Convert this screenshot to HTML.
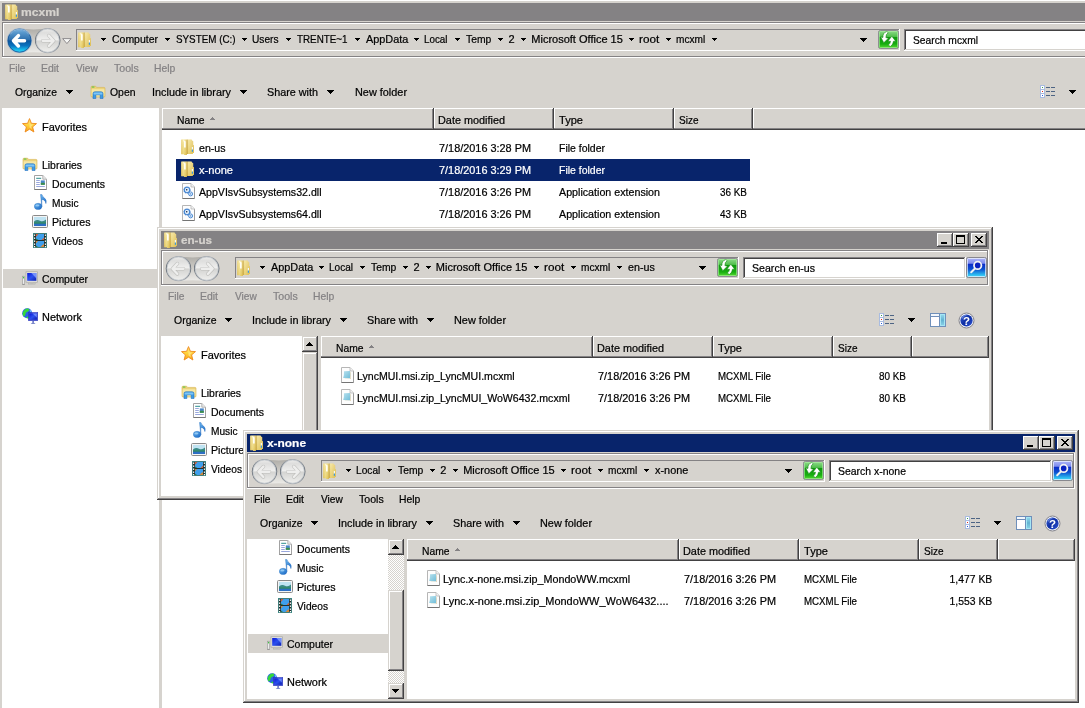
<!DOCTYPE html>
<html><head><meta charset="utf-8"><title>mcxml</title><style>html,body{margin:0;padding:0}body{width:1085px;height:708px;overflow:hidden;background:#fff;position:relative;font-family:"Liberation Sans",sans-serif;font-size:11px;line-height:13px;color:#000}div,span,svg{position:absolute;display:block}span{white-space:pre;-webkit-text-stroke:.22px}.w{background:#d6d3ce;overflow:hidden}</style></head><body>
<div id="root" style="left:0;top:0;width:1085px;height:708px;will-change:transform">
<svg width="0" height="0" style="left:0;top:0"><defs>
<linearGradient id="gFold" x1="0" y1="0" x2="1" y2="0"><stop offset="0" stop-color="#e9cd68"/><stop offset=".2" stop-color="#f6e690"/><stop offset=".4" stop-color="#e7cb62"/><stop offset=".49" stop-color="#cfac44"/><stop offset=".58" stop-color="#f3df86"/><stop offset="1" stop-color="#e2c256"/></linearGradient>
<linearGradient id="gFoldV" x1="0" y1="0" x2="0" y2="1"><stop offset="0" stop-color="#fff" stop-opacity=".25"/><stop offset="1" stop-color="#c9a63c" stop-opacity=".25"/></linearGradient>
<linearGradient id="gBlue" x1="0" y1="0" x2="0" y2="1"><stop offset="0" stop-color="#86b8e0"/><stop offset=".14" stop-color="#5b9ace"/><stop offset=".49" stop-color="#2a6cab"/><stop offset=".5" stop-color="#0a559c"/><stop offset=".72" stop-color="#0a74c0"/><stop offset=".9" stop-color="#19bdec"/><stop offset="1" stop-color="#3ad8fa"/></linearGradient>
<linearGradient id="gDis" x1="0" y1="0" x2="0" y2="1"><stop offset="0" stop-color="#ebebea"/><stop offset=".16" stop-color="#dededd"/><stop offset=".49" stop-color="#f0f0ef"/><stop offset=".5" stop-color="#d3d3d1"/><stop offset="1" stop-color="#efefed"/></linearGradient>
<linearGradient id="gRing" x1="0" y1="0" x2="0" y2="1"><stop offset="0" stop-color="#a9aeb4"/><stop offset=".5" stop-color="#59616b"/><stop offset="1" stop-color="#a9aeb4"/></linearGradient>
<linearGradient id="gBridge" x1="0" y1="0" x2="0" y2="1"><stop offset="0" stop-color="#aeaca7"/><stop offset=".5" stop-color="#cfcdc8"/><stop offset="1" stop-color="#ecebe8"/></linearGradient>
<linearGradient id="gGreen" x1="0" y1="0" x2="0" y2="1"><stop offset="0" stop-color="#92dc8e"/><stop offset=".33" stop-color="#52c04e"/><stop offset=".38" stop-color="#0f9a0f"/><stop offset=".75" stop-color="#18ae10"/><stop offset="1" stop-color="#5ee038"/></linearGradient>
<linearGradient id="gSrch" x1="0" y1="0" x2="0" y2="1"><stop offset="0" stop-color="#b8bcfa"/><stop offset=".12" stop-color="#9ca6f4"/><stop offset=".29" stop-color="#7e8cee"/><stop offset=".33" stop-color="#0c2cc8"/><stop offset=".58" stop-color="#0a4ed0"/><stop offset=".85" stop-color="#2ab6ee"/><stop offset="1" stop-color="#4ee0fa"/></linearGradient>
<linearGradient id="gHelp" x1="0" y1="0" x2="1" y2="1"><stop offset="0" stop-color="#3a5ed0"/><stop offset=".5" stop-color="#0d2ea4"/><stop offset="1" stop-color="#2f55d4"/></linearGradient>
<linearGradient id="gSky" x1="0" y1="0" x2="1" y2="1"><stop offset="0" stop-color="#b9e2ee"/><stop offset="1" stop-color="#6fbcd8"/></linearGradient>
<linearGradient id="gMon" x1="0" y1="0" x2="1" y2="1"><stop offset="0" stop-color="#0a18d8"/><stop offset=".5" stop-color="#2b50ee"/><stop offset="1" stop-color="#0c1fb0"/></linearGradient>
<linearGradient id="gStar" x1="0" y1="0" x2="0" y2="1"><stop offset="0" stop-color="#ffe27a"/><stop offset=".5" stop-color="#ffd23a"/><stop offset="1" stop-color="#f7a21b"/></linearGradient>
<linearGradient id="gNote" x1="0" y1="0" x2="1" y2="1"><stop offset="0" stop-color="#6db6ee"/><stop offset="1" stop-color="#1565c4"/></linearGradient>
<linearGradient id="gPane" x1="0" y1="0" x2="0" y2="1"><stop offset="0" stop-color="#8fd4ea"/><stop offset=".5" stop-color="#62b2d2"/><stop offset="1" stop-color="#86cfe6"/></linearGradient>
<pattern id="dith" width="2" height="2" patternUnits="userSpaceOnUse"><rect width="2" height="2" fill="#d6d3ce"/><rect width="1" height="1" fill="#fff"/><rect x="1" y="1" width="1" height="1" fill="#fff"/></pattern>
</defs></svg>
<div class="w" style="left:-2px;top:-1px;width:1156px;height:760px">
<div style="left:1px;top:1px;width:1154px;height:1px;background:#ffffff;"></div>
<div style="left:1px;top:1px;width:1px;height:758px;background:#ffffff;"></div>
<div style="left:0px;top:759px;width:1156px;height:1px;background:#424142;"></div>
<div style="left:1155px;top:0px;width:1px;height:760px;background:#424142;"></div>
<div style="left:1px;top:758px;width:1154px;height:1px;background:#848284;"></div>
<div style="left:1154px;top:1px;width:1px;height:758px;background:#848284;"></div>
<div style="left:4px;top:4px;width:1148px;height:18px;background:#848284;"></div>
<svg style="left:7px;top:5px" width="13" height="16" viewBox="0 0 13 16"><path d="M0.6 0.4h9.6q.8 0 .8 .8v.6h.6q.6 0 .6 .6v3.6h.3q.5 0 .5 .5v7q0 .5-.5 .5h-.6v.6q0 .5-.5 .5H6v.5q0 .4-.4 .4H3.4q-.4 0-.4-.4V15.200H.6q-.5 0-.5-.5V.9q0-.5 .5-.5z" fill="url(#gFold)"/><path d="M0.6 0.4h9.6q.8 0 .8 .8v.6h.6q.6 0 .6 .6v3.6h.3q.5 0 .5 .5v7q0 .5-.5 .5h-.6v.6q0 .5-.5 .5H6v.5q0 .4-.4 .4H3.4q-.4 0-.4-.4V15.200H.6q-.5 0-.5-.5V.9q0-.5 .5-.5z" fill="url(#gFoldV)"/><path d="M1.900 1.200l1.900 .5q.9 .3 .9 1.200V8.500H3V2.900z" fill="#fffef6"/><rect x="5.400" y="1" width=".9" height="14" fill="#cdb052" opacity=".55"/><rect x="10.800" y="8" width="1.200" height="2.600" fill="#f4f8fb"/><rect x="10.800" y="10.600" width="1.200" height="2.200" fill="#3a9ae0"/></svg>
<span style="left:23px;top:7px;transform:scaleX(1.0989);transform-origin:0 0;font-weight:bold;color:#d6d3ce;">mcxml</span>
<div style="left:4px;top:23px;width:1148px;height:1px;background:#848284;"></div>
<div style="left:4px;top:23px;width:1px;height:36px;background:#848284;"></div>
<div style="left:5px;top:24px;width:1146px;height:1px;background:#ffffff;"></div>
<div style="left:5px;top:24px;width:1px;height:34px;background:#ffffff;"></div>
<div style="left:5px;top:57px;width:1146px;height:1px;background:#848284;"></div>
<div style="left:1150px;top:24px;width:1px;height:34px;background:#848284;"></div>
<div style="left:4px;top:58px;width:1148px;height:1px;background:#ffffff;"></div>
<div style="left:1151px;top:23px;width:1px;height:36px;background:#ffffff;"></div>
<svg style="left:7px;top:27px" width="58" height="29" viewBox="0 0 58 29"><path d="M12.5 2.299999999999999Q28.6 4.6 44.7 2.299999999999999V26.9Q28.6 25.6 12.5 26.9z" fill="url(#gBridge)"/><circle cx="14.5" cy="14.6" r="12.7" fill="#a9bccd"/><circle cx="14.5" cy="14.6" r="11.6" fill="url(#gBlue)" stroke="#0f4f94" stroke-width=".8"/><path d="M5.0 8.6A11 11 0 0 1 24.0 8.6" fill="none" stroke="#b8d6ee" stroke-width="1" opacity=".7"/><path d="M19.5 14.799999999999999H9.5M13.4 9.6L8.5 14.799999999999999L13.4 20.0" fill="none" stroke="#fff" stroke-width="3.5" stroke-linecap="round" stroke-linejoin="round" opacity="1"/><circle cx="42.7" cy="14.6" r="12.7" fill="url(#gRing)"/><circle cx="42.7" cy="14.6" r="11.6" fill="url(#gDis)" stroke="#c4c9ce" stroke-width=".8"/><path d="M37.7 14.799999999999999H47.7M43.800000000000004 9.6L48.7 14.799999999999999L43.800000000000004 20.0" fill="none" stroke="#b4b3b0" stroke-width="3.6" stroke-linecap="round" stroke-linejoin="round" opacity="0.7"/><path d="M37.7 14.799999999999999H47.7M43.800000000000004 9.6L48.7 14.799999999999999L43.800000000000004 20.0" fill="none" stroke="#eeeeed" stroke-width="2.4" stroke-linecap="round" stroke-linejoin="round" opacity="1"/></svg>
<svg style="left:64px;top:39px" width="10" height="7"><path d="M.7 .6h8.400L4.900 5.600z" fill="#f6f6f4" stroke="#848284" stroke-width=".9"/></svg>
<div style="left:78px;top:30px;width:824px;height:1px;background:#848284;"></div>
<div style="left:78px;top:30px;width:1px;height:22px;background:#848284;"></div>
<div style="left:78px;top:51px;width:824px;height:1px;background:#ffffff;"></div>
<div style="left:901px;top:30px;width:1px;height:22px;background:#ffffff;"></div>
<svg style="left:80px;top:33px" width="13" height="16" viewBox="0 0 13 16"><path d="M0.6 0.4h9.6q.8 0 .8 .8v.6h.6q.6 0 .6 .6v3.6h.3q.5 0 .5 .5v7q0 .5-.5 .5h-.6v.6q0 .5-.5 .5H6v.5q0 .4-.4 .4H3.4q-.4 0-.4-.4V15.200H.6q-.5 0-.5-.5V.9q0-.5 .5-.5z" fill="url(#gFold)"/><path d="M0.6 0.4h9.6q.8 0 .8 .8v.6h.6q.6 0 .6 .6v3.6h.3q.5 0 .5 .5v7q0 .5-.5 .5h-.6v.6q0 .5-.5 .5H6v.5q0 .4-.4 .4H3.4q-.4 0-.4-.4V15.200H.6q-.5 0-.5-.5V.9q0-.5 .5-.5z" fill="url(#gFoldV)"/><path d="M1.900 1.200l1.900 .5q.9 .3 .9 1.200V8.500H3V2.900z" fill="#fffef6"/><rect x="5.400" y="1" width=".9" height="14" fill="#cdb052" opacity=".55"/><rect x="10.800" y="8" width="1.200" height="2.600" fill="#f4f8fb"/><rect x="10.800" y="10.600" width="1.200" height="2.200" fill="#3a9ae0"/></svg>
<svg style="left:103px;top:39px" width="5" height="3" shape-rendering="crispEdges" fill="#000"><rect x="0" y="0" width="5" height="1"/><rect x="1" y="1" width="3" height="1"/><rect x="2" y="2" width="1" height="1"/></svg>
<span style="left:113.5px;top:34px;transform:scaleX(0.9525);transform-origin:0 0;">Computer</span>
<svg style="left:167px;top:39px" width="5" height="3" shape-rendering="crispEdges" fill="#000"><rect x="0" y="0" width="5" height="1"/><rect x="1" y="1" width="3" height="1"/><rect x="2" y="2" width="1" height="1"/></svg>
<span style="left:177.5px;top:34px;transform:scaleX(0.8932);transform-origin:0 0;">SYSTEM (C:)</span>
<svg style="left:244px;top:39px" width="5" height="3" shape-rendering="crispEdges" fill="#000"><rect x="0" y="0" width="5" height="1"/><rect x="1" y="1" width="3" height="1"/><rect x="2" y="2" width="1" height="1"/></svg>
<span style="left:254.3px;top:34px;transform:scaleX(0.9226);transform-origin:0 0;">Users</span>
<svg style="left:288px;top:39px" width="5" height="3" shape-rendering="crispEdges" fill="#000"><rect x="0" y="0" width="5" height="1"/><rect x="1" y="1" width="3" height="1"/><rect x="2" y="2" width="1" height="1"/></svg>
<span style="left:298.5px;top:34px;transform:scaleX(0.8932);transform-origin:0 0;">TRENTE~1</span>
<svg style="left:357px;top:39px" width="5" height="3" shape-rendering="crispEdges" fill="#000"><rect x="0" y="0" width="5" height="1"/><rect x="1" y="1" width="3" height="1"/><rect x="2" y="2" width="1" height="1"/></svg>
<span style="left:367.5px;top:34px;transform:scaleX(0.9882);transform-origin:0 0;">AppData</span>
<svg style="left:416px;top:39px" width="5" height="3" shape-rendering="crispEdges" fill="#000"><rect x="0" y="0" width="5" height="1"/><rect x="1" y="1" width="3" height="1"/><rect x="2" y="2" width="1" height="1"/></svg>
<span style="left:426.3px;top:34px;transform:scaleX(0.8937);transform-origin:0 0;">Local</span>
<svg style="left:457px;top:39px" width="5" height="3" shape-rendering="crispEdges" fill="#000"><rect x="0" y="0" width="5" height="1"/><rect x="1" y="1" width="3" height="1"/><rect x="2" y="2" width="1" height="1"/></svg>
<span style="left:467.5px;top:34px;transform:scaleX(0.9406);transform-origin:0 0;">Temp</span>
<svg style="left:500px;top:39px" width="5" height="3" shape-rendering="crispEdges" fill="#000"><rect x="0" y="0" width="5" height="1"/><rect x="1" y="1" width="3" height="1"/><rect x="2" y="2" width="1" height="1"/></svg>
<span style="left:510.5px;top:34px;">2</span>
<svg style="left:523px;top:39px" width="5" height="3" shape-rendering="crispEdges" fill="#000"><rect x="0" y="0" width="5" height="1"/><rect x="1" y="1" width="3" height="1"/><rect x="2" y="2" width="1" height="1"/></svg>
<span style="left:533.3px;top:34px;">Microsoft Office 15</span>
<svg style="left:631px;top:39px" width="5" height="3" shape-rendering="crispEdges" fill="#000"><rect x="0" y="0" width="5" height="1"/><rect x="1" y="1" width="3" height="1"/><rect x="2" y="2" width="1" height="1"/></svg>
<span style="left:641.2px;top:34px;transform:scaleX(1.0658);transform-origin:0 0;">root</span>
<svg style="left:668px;top:39px" width="5" height="3" shape-rendering="crispEdges" fill="#000"><rect x="0" y="0" width="5" height="1"/><rect x="1" y="1" width="3" height="1"/><rect x="2" y="2" width="1" height="1"/></svg>
<span style="left:678px;top:34px;transform:scaleX(0.9191);transform-origin:0 0;">mcxml</span>
<svg style="left:714px;top:39px" width="5" height="3" shape-rendering="crispEdges" fill="#000"><rect x="0" y="0" width="5" height="1"/><rect x="1" y="1" width="3" height="1"/><rect x="2" y="2" width="1" height="1"/></svg>
<svg style="left:862px;top:39px" width="7" height="4" shape-rendering="crispEdges" fill="#000"><rect x="0" y="0" width="7" height="1"/><rect x="1" y="1" width="5" height="1"/><rect x="2" y="2" width="3" height="1"/><rect x="3" y="3" width="1" height="1"/></svg>
<svg style="left:880px;top:31px" width="21" height="19" viewBox="0 0 21 19"><rect x=".5" y=".5" width="20" height="18" rx="1.800" fill="url(#gGreen)" stroke="#8e8e92"/><rect x="1.500" y="1.500" width="18" height="16" rx="1" fill="none" stroke="#b4f0a8" stroke-width=".8" opacity=".75"/><path d="M10.200 2.800Q7.700 4 7.900 7.600L10.400 8.200 5.800 12.700 2.700 6.900 5 7.400Q4.500 3 8.800 1.500z" fill="#fff" stroke="#0c7c0c" stroke-width=".5"/><path d="M13.800 6.300L17.700 11.200H15.500Q15.100 14.900 12.300 16.500L10.300 15Q12.500 13.600 12.500 11.200H9.900z" fill="#fff" stroke="#0c7c0c" stroke-width=".5"/></svg>
<div style="left:906px;top:30px;width:223px;height:22px;background:#ffffff;"></div>
<div style="left:906px;top:30px;width:223px;height:1px;background:#848284;"></div>
<div style="left:906px;top:30px;width:1px;height:22px;background:#848284;"></div>
<div style="left:907px;top:31px;width:221px;height:1px;background:#424142;"></div>
<div style="left:907px;top:31px;width:1px;height:20px;background:#424142;"></div>
<div style="left:907px;top:50px;width:221px;height:1px;background:#d6d3ce;"></div>
<div style="left:1127px;top:31px;width:1px;height:20px;background:#d6d3ce;"></div>
<div style="left:906px;top:51px;width:223px;height:1px;background:#ffffff;"></div>
<div style="left:1128px;top:30px;width:1px;height:22px;background:#ffffff;"></div>
<span style="left:914.5px;top:35px;transform:scaleX(0.9329);transform-origin:0 0;">Search mcxml</span>
<span style="left:11.2px;top:63px;transform:scaleX(0.9310);transform-origin:0 0;color:#848284;">File</span>
<span style="left:42.8px;top:63px;transform:scaleX(0.9496);transform-origin:0 0;color:#848284;">Edit</span>
<span style="left:77.8px;top:63px;transform:scaleX(0.9220);transform-origin:0 0;color:#848284;">View</span>
<span style="left:116px;top:63px;transform:scaleX(0.9619);transform-origin:0 0;color:#848284;">Tools</span>
<span style="left:156px;top:63px;transform:scaleX(0.9416);transform-origin:0 0;color:#848284;">Help</span>
<svg style="left:92px;top:86px" width="16" height="14" viewBox="0 0 16 14"><path d="M1 2.200q0-1 1-1h3.600l1 1.200H14q1 0 1 1V11q0 1-1 1H2q-1 0-1-1z" fill="#ecd27a" stroke="#d6b34d" stroke-width=".6"/><rect x="1.800" y="1.600" width="2.600" height=".9" fill="#39c43e"/><path d="M1.600 4.200h12.800v6.600q0 .6-.6 .6H2.200q-.6 0-.6-.6z" fill="#f6e7a6"/><path d="M3 13.600V8.600q0-1.800 1.800-1.800h6.400q1.800 0 1.800 1.800v5H10.200V10.400q0-.6-.6-.6H6.400q-.6 0-.6 .6v3.200z" fill="#3d9be6" stroke="#1f6fc0" stroke-width=".6"/><path d="M3.600 8.600q0-1.200 1.200-1.200h6.400q1.200 0 1.200 1.200v.8H3.600z" fill="#8fd0f8" opacity=".8"/></svg>
<span style="left:17px;top:87px;transform:scaleX(0.9410);transform-origin:0 0;">Organize</span>
<svg style="left:68px;top:91px" width="7" height="4" shape-rendering="crispEdges" fill="#000"><rect x="0" y="0" width="7" height="1"/><rect x="1" y="1" width="5" height="1"/><rect x="2" y="2" width="3" height="1"/><rect x="3" y="3" width="1" height="1"/></svg>
<span style="left:111.5px;top:87px;transform:scaleX(0.9477);transform-origin:0 0;">Open</span>
<span style="left:154px;top:87px;transform:scaleX(0.9864);transform-origin:0 0;">Include in library</span>
<svg style="left:242px;top:91px" width="7" height="4" shape-rendering="crispEdges" fill="#000"><rect x="0" y="0" width="7" height="1"/><rect x="1" y="1" width="5" height="1"/><rect x="2" y="2" width="3" height="1"/><rect x="3" y="3" width="1" height="1"/></svg>
<span style="left:269.3px;top:87px;transform:scaleX(0.9814);transform-origin:0 0;">Share with</span>
<svg style="left:329px;top:91px" width="7" height="4" shape-rendering="crispEdges" fill="#000"><rect x="0" y="0" width="7" height="1"/><rect x="1" y="1" width="5" height="1"/><rect x="2" y="2" width="3" height="1"/><rect x="3" y="3" width="1" height="1"/></svg>
<span style="left:356.5px;top:87px;transform:scaleX(0.9891);transform-origin:0 0;">New folder</span>
<svg style="left:1042px;top:86px" width="15" height="13" viewBox="0 0 15 13"><g shape-rendering="crispEdges"><rect x="0" y="0" width="5" height="13" fill="#a9bce0"/><rect x="1" y="1" width="3" height="3" fill="#fff"/><rect x="2" y="2" width="1" height="1" fill="#3a9a4a"/><rect x="6" y="2" width="4" height="1" fill="#4d6484"/><rect x="11" y="2" width="4" height="1" fill="#4d6484"/><rect x="1" y="5" width="3" height="3" fill="#fff"/><rect x="2" y="6" width="1" height="1" fill="#e02a1a"/><rect x="6" y="6" width="4" height="1" fill="#4d6484"/><rect x="11" y="6" width="4" height="1" fill="#4d6484"/><rect x="1" y="9" width="3" height="3" fill="#fff"/><rect x="2" y="10" width="1" height="1" fill="#2a5ae0"/><rect x="6" y="10" width="4" height="1" fill="#4d6484"/><rect x="11" y="10" width="4" height="1" fill="#4d6484"/></g></svg>
<svg style="left:1071px;top:91px" width="7" height="4" shape-rendering="crispEdges" fill="#000"><rect x="0" y="0" width="7" height="1"/><rect x="1" y="1" width="5" height="1"/><rect x="2" y="2" width="3" height="1"/><rect x="3" y="3" width="1" height="1"/></svg>
<div style="left:4px;top:109px;width:157px;height:647px;background:#fff;overflow:hidden">
<svg style="left:20px;top:10px" width="15" height="15" viewBox="0 0 15 15"><path d="M7.500 .6L9.400 5.300 14.500 5.600 10.600 8.900 11.900 14 7.500 11.200 3.100 14 4.400 8.900 .5 5.600 5.600 5.300z" fill="url(#gStar)" stroke="#ee8a1e" stroke-width=".9" stroke-linejoin="round"/><path d="M7.500 3.500l1.100 2.900 2.700 .2-2.100 1.800 .7 2.700-2.400-1.500z" fill="#fff3b0" opacity=".55"/></svg>
<span style="left:39.8px;top:13px;transform:scaleX(0.9949);transform-origin:0 0;">Favorites</span>
<svg style="left:20px;top:49px" width="16" height="14" viewBox="0 0 16 14"><path d="M1 2.200q0-1 1-1h3.600l1 1.200H14q1 0 1 1V11q0 1-1 1H2q-1 0-1-1z" fill="#ecd27a" stroke="#d6b34d" stroke-width=".6"/><rect x="1.800" y="1.600" width="2.600" height=".9" fill="#39c43e"/><path d="M1.600 4.200h12.800v6.600q0 .6-.6 .6H2.200q-.6 0-.6-.6z" fill="#f6e7a6"/><path d="M3 13.600V8.600q0-1.800 1.800-1.800h6.400q1.800 0 1.800 1.800v5H10.200V10.400q0-.6-.6-.6H6.400q-.6 0-.6 .6v3.200z" fill="#3d9be6" stroke="#1f6fc0" stroke-width=".6"/><path d="M3.600 8.600q0-1.200 1.200-1.200h6.400q1.200 0 1.200 1.200v.8H3.600z" fill="#8fd0f8" opacity=".8"/></svg>
<span style="left:39.8px;top:51px;transform:scaleX(0.9483);transform-origin:0 0;">Libraries</span>
<svg style="left:32px;top:67px" width="13" height="15" viewBox="0 0 13 15"><path d="M.5 .5h8.300l3.700 3.700V14.500H.5z" fill="#fff" stroke="#a2a2a2" stroke-width="1"/><path d="M8.800 .5v3.700h3.700" fill="#ececec" stroke="#a2a2a2" stroke-width=".8"/><g stroke="#8c9cd8" stroke-width=".9"><path d="M2.200 5.500h3.600M2.200 7.500h3.600M2.200 9.500h3.600M2.200 11.500h8.600"/></g><path d="M2.200 3.300h5" stroke="#2a8c8c" stroke-width="1"/><rect x="6.800" y="5.400" width="4" height="4.400" fill="#4a86c8"/><rect x="6.800" y="7.800" width="4" height="2" fill="#3f8f4a"/><path d="M.5 14.500h12" stroke="#777" stroke-width="1"/></svg>
<span style="left:49.9px;top:70px;transform:scaleX(0.9527);transform-origin:0 0;">Documents</span>
<svg style="left:32px;top:86px" width="13" height="16" viewBox="0 0 13 16"><path d="M6.500 .4h1.300q.5 2 2.600 3.500 2.700 2 1.500 5.700-.1-2.700-2.300-3.700-1-.4-1.800-.5V12.500z" fill="url(#gNote)" stroke="#1d66bc" stroke-width=".4"/><ellipse cx="4.100" cy="12.400" rx="3.800" ry="3.100" fill="url(#gNote)" stroke="#1d66bc" stroke-width=".4"/><ellipse cx="3.400" cy="11.400" rx="2" ry="1" fill="#a8d8fa" opacity=".75"/></svg>
<span style="left:49.9px;top:89px;transform:scaleX(0.9226);transform-origin:0 0;">Music</span>
<svg style="left:29.8px;top:107px" width="16" height="13" viewBox="0 0 16 13"><rect x=".5" y=".5" width="15" height="12" rx="1" fill="#f4f4f4" stroke="#8a8a8a"/><rect x="2" y="2" width="12" height="9" fill="#bfe3f2"/><path d="M2 6.500q3-2.500 6-.8t6-1.200V9H2z" fill="#3b8a86"/><rect x="2" y="8.200" width="12" height="2.800" fill="#2d6fc4"/><rect x="2" y="7.600" width="12" height=".9" fill="#2f8a4e"/></svg>
<span style="left:49.9px;top:108px;transform:scaleX(0.9689);transform-origin:0 0;">Pictures</span>
<svg style="left:31px;top:125px" width="14" height="15" viewBox="0 0 14 15"><rect x=".3" y=".3" width="13.400" height="14.400" fill="#20302e" stroke="#2e8a86" stroke-width=".6"/><rect x="3" y="1" width="8" height="6" fill="#3f9fec"/><rect x="3" y="8" width="8" height="6" fill="#3f9fec"/><path d="M3 1h2.500L3 4zM11 4.500V7H8.500z" fill="#c8603a"/><path d="M3 8h2L3 10.500zM11 11v3H7.500l2-2z" fill="#d08a3a"/><path d="M3 5.500l2.500 1.500H3zM3 12.500l2 1.500H3z" fill="#2a7a4a"/><g fill="#fff"><rect x="1" y="1.500" width="1.200" height="1.400"/><rect x="1" y="4.500" width="1.200" height="1.400"/><rect x="1" y="7.500" width="1.200" height="1.400"/><rect x="1" y="10.500" width="1.200" height="1.400"/><rect x="1" y="13" width="1.200" height="1.200"/><rect x="11.800" y="1.500" width="1.200" height="1.400"/><rect x="11.800" y="4.500" width="1.200" height="1.400"/><rect x="11.800" y="7.500" width="1.200" height="1.400"/><rect x="11.800" y="10.500" width="1.200" height="1.400"/><rect x="11.800" y="13" width="1.200" height="1.200"/></g></svg>
<span style="left:49.9px;top:127px;transform:scaleX(0.9272);transform-origin:0 0;">Videos</span>
<div style="left:1px;top:161px;width:156px;height:19px;background:#d6d3ce;"></div>
<svg style="left:20px;top:163px" width="16" height="14" viewBox="0 0 16 14"><rect x=".6" y="5.200" width="2" height="8" fill="#ececec" stroke="#9a9a9a" stroke-width=".6"/><rect x="1.100" y="5.800" width="1" height="1.600" fill="#2fc02f"/><rect x="4" y=".8" width="11.600" height="10.400" fill="#e6e6e2" stroke="#a4a4a0" stroke-width=".7"/><rect x="5.200" y="2" width="9.200" height="7.800" fill="url(#gMon)"/><path d="M9.400 2h5v5.500z" fill="#8fa8ff" opacity=".75"/><rect x="8.400" y="11.400" width="2.800" height="1.400" fill="#c0c0bc"/><rect x="6.200" y="12.600" width="7.200" height="1.100" fill="#dededa" stroke="#a4a4a0" stroke-width=".4"/><rect x=".4" y="13.200" width="2.400" height=".7" fill="#8a8a8a"/></svg>
<span style="left:39.8px;top:165px;transform:scaleX(0.9525);transform-origin:0 0;">Computer</span>
<svg style="left:20px;top:200px" width="16" height="16" viewBox="0 0 16 16"><circle cx="5.200" cy="5.300" r="5" fill="#2a62e4"/><path d="M1.600 3q2-2.800 4.800-2.400 1.600 1.400-.4 3-2.600 .6-2.600 2.600T1.500 8.400Q-.2 5.600 1.600 3z" fill="#34d83a"/><path d="M5.600 8.400q2 .4 1.600 2-2 .6-3.200-1z" fill="#34d83a"/><path d="M7.400 1.400q2 1 2.600 3l-1.600-.4z" fill="#7fd0ff"/><rect x="6.400" y="4.600" width="9.400" height="8" fill="#3a4ad8" stroke="#2a38b8" stroke-width=".6"/><rect x="7.400" y="5.600" width="7.400" height="6" fill="url(#gMon)"/><path d="M10.500 5.600h4.300v4z" fill="#7f9aff" opacity=".75"/><rect x="10.400" y="12.800" width="1.400" height="1.800" fill="#5060c0"/><path d="M8.600 15.700l2.500-1.400 2.500 1.400z" fill="#5060b8"/></svg>
<span style="left:39.8px;top:203px;transform:scaleX(0.9916);transform-origin:0 0;">Network</span>
</div>
<div style="left:164px;top:109px;width:988px;height:647px;background:#ffffff;"></div>
<div style="left:164px;top:109px;width:988px;height:22px;background:#d6d3ce;"></div>
<div style="left:164px;top:129px;width:988px;height:1px;background:#848284;"></div>
<div style="left:164px;top:130px;width:988px;height:1px;background:#424142;"></div>
<div style="left:164px;top:109px;width:272px;height:1px;background:#ffffff;"></div>
<div style="left:164px;top:109px;width:1px;height:20px;background:#ffffff;"></div>
<div style="left:434px;top:110px;width:1px;height:20px;background:#848284;"></div>
<div style="left:435px;top:109px;width:1px;height:22px;background:#424142;"></div>
<span style="left:179.3px;top:115px;transform:scaleX(0.9373);transform-origin:0 0;">Name</span>
<div style="left:436px;top:109px;width:120px;height:1px;background:#ffffff;"></div>
<div style="left:436px;top:109px;width:1px;height:20px;background:#ffffff;"></div>
<div style="left:554px;top:110px;width:1px;height:20px;background:#848284;"></div>
<div style="left:555px;top:109px;width:1px;height:22px;background:#424142;"></div>
<span style="left:440.2px;top:115px;transform:scaleX(0.9872);transform-origin:0 0;">Date modified</span>
<div style="left:556px;top:109px;width:120px;height:1px;background:#ffffff;"></div>
<div style="left:556px;top:109px;width:1px;height:20px;background:#ffffff;"></div>
<div style="left:674px;top:110px;width:1px;height:20px;background:#848284;"></div>
<div style="left:675px;top:109px;width:1px;height:22px;background:#424142;"></div>
<span style="left:561px;top:115px;transform:scaleX(1.0064);transform-origin:0 0;">Type</span>
<div style="left:676px;top:109px;width:79px;height:1px;background:#ffffff;"></div>
<div style="left:676px;top:109px;width:1px;height:20px;background:#ffffff;"></div>
<div style="left:753px;top:110px;width:1px;height:20px;background:#848284;"></div>
<div style="left:754px;top:109px;width:1px;height:22px;background:#424142;"></div>
<span style="left:681px;top:115px;transform:scaleX(0.9113);transform-origin:0 0;">Size</span>
<div style="left:755px;top:109px;width:397px;height:1px;background:#ffffff;"></div>
<div style="left:755px;top:109px;width:1px;height:20px;background:#ffffff;"></div>
<div style="left:1150px;top:110px;width:1px;height:20px;background:#848284;"></div>
<div style="left:1151px;top:109px;width:1px;height:22px;background:#424142;"></div>
<svg style="left:212px;top:118px" width="5" height="3" shape-rendering="crispEdges" fill="#848284"><rect x="2" y="0" width="1" height="1"/><rect x="1" y="1" width="3" height="1"/><rect x="0" y="2" width="5" height="1"/></svg>
<svg style="left:183px;top:140px" width="13" height="16" viewBox="0 0 13 16"><path d="M0.6 0.4h9.6q.8 0 .8 .8v.6h.6q.6 0 .6 .6v3.6h.3q.5 0 .5 .5v7q0 .5-.5 .5h-.6v.6q0 .5-.5 .5H6v.5q0 .4-.4 .4H3.4q-.4 0-.4-.4V15.200H.6q-.5 0-.5-.5V.9q0-.5 .5-.5z" fill="url(#gFold)"/><path d="M0.6 0.4h9.6q.8 0 .8 .8v.6h.6q.6 0 .6 .6v3.6h.3q.5 0 .5 .5v7q0 .5-.5 .5h-.6v.6q0 .5-.5 .5H6v.5q0 .4-.4 .4H3.4q-.4 0-.4-.4V15.200H.6q-.5 0-.5-.5V.9q0-.5 .5-.5z" fill="url(#gFoldV)"/><path d="M1.900 1.200l1.900 .5q.9 .3 .9 1.200V8.500H3V2.900z" fill="#fffef6"/><rect x="5.400" y="1" width=".9" height="14" fill="#cdb052" opacity=".55"/><rect x="10.800" y="8" width="1.200" height="2.600" fill="#f4f8fb"/><rect x="10.800" y="10.600" width="1.200" height="2.200" fill="#3a9ae0"/></svg>
<span style="left:201.2px;top:143px;transform:scaleX(0.9631);transform-origin:0 0;">en-us</span>
<span style="left:440.5px;top:143px;transform:scaleX(0.9897);transform-origin:0 0;">7/18/2016 3:28 PM</span>
<span style="left:561px;top:143px;transform:scaleX(0.9525);transform-origin:0 0;">File folder</span>
<div style="left:178px;top:160px;width:574px;height:22px;background:#08246b;"></div>
<svg style="left:183px;top:162px" width="13" height="16" viewBox="0 0 13 16"><path d="M0.6 0.4h9.6q.8 0 .8 .8v.6h.6q.6 0 .6 .6v3.6h.3q.5 0 .5 .5v7q0 .5-.5 .5h-.6v.6q0 .5-.5 .5H6v.5q0 .4-.4 .4H3.4q-.4 0-.4-.4V15.200H.6q-.5 0-.5-.5V.9q0-.5 .5-.5z" fill="url(#gFold)"/><path d="M0.6 0.4h9.6q.8 0 .8 .8v.6h.6q.6 0 .6 .6v3.6h.3q.5 0 .5 .5v7q0 .5-.5 .5h-.6v.6q0 .5-.5 .5H6v.5q0 .4-.4 .4H3.4q-.4 0-.4-.4V15.200H.6q-.5 0-.5-.5V.9q0-.5 .5-.5z" fill="url(#gFoldV)"/><path d="M1.900 1.200l1.900 .5q.9 .3 .9 1.200V8.500H3V2.900z" fill="#fffef6"/><rect x="5.400" y="1" width=".9" height="14" fill="#cdb052" opacity=".55"/><rect x="10.800" y="8" width="1.200" height="2.600" fill="#f4f8fb"/><rect x="10.800" y="10.600" width="1.200" height="2.200" fill="#3a9ae0"/></svg>
<span style="left:201.2px;top:165px;transform:scaleX(1.0110);transform-origin:0 0;color:#fff;">x-none</span>
<span style="left:440.5px;top:165px;transform:scaleX(0.9897);transform-origin:0 0;color:#fff;">7/18/2016 3:29 PM</span>
<span style="left:561px;top:165px;transform:scaleX(0.9525);transform-origin:0 0;color:#fff;">File folder</span>
<svg style="left:184px;top:184px" width="13" height="16" viewBox="0 0 13 16"><path d="M.5 .5h8.500l3.500 3.500V15.500H.5z" fill="#fdfdfd" stroke="#b6b6b6" stroke-width="1"/><path d="M9 .5v3.500h3.500" fill="#f2f2f2" stroke="#b6b6b6" stroke-width=".8"/><path d="M.5 15.500h12" stroke="#747474" stroke-width="1"/><path d="M12.500 4.500v11" stroke="#9c9c9c" stroke-width="1"/><circle cx="5" cy="7" r="2.700" fill="#e4f0fc" stroke="#4a8ad4" stroke-width="1.100"/><circle cx="5" cy="7" r="3.300" fill="none" stroke="#2a6ac0" stroke-width=".7" stroke-dasharray=".9 1.200"/><circle cx="4.700" cy="6.700" r=".8" fill="#1a2a44"/><circle cx="8.600" cy="10.900" r="2" fill="#eef6fe" stroke="#4a8ad4" stroke-width="1"/><path d="M7.700 10.900h1.800M8.600 10v1.800" stroke="#3a7fd0" stroke-width=".5"/></svg>
<span style="left:201.2px;top:187px;transform:scaleX(0.9633);transform-origin:0 0;">AppVIsvSubsystems32.dll</span>
<span style="left:440.5px;top:187px;transform:scaleX(0.9897);transform-origin:0 0;">7/18/2016 3:26 PM</span>
<span style="left:561px;top:187px;transform:scaleX(0.9716);transform-origin:0 0;">Application extension</span>
<span style="right:407px;top:187px;transform:scaleX(0.9010);transform-origin:100% 0;">36 KB</span>
<svg style="left:184px;top:206px" width="13" height="16" viewBox="0 0 13 16"><path d="M.5 .5h8.500l3.500 3.500V15.500H.5z" fill="#fdfdfd" stroke="#b6b6b6" stroke-width="1"/><path d="M9 .5v3.500h3.500" fill="#f2f2f2" stroke="#b6b6b6" stroke-width=".8"/><path d="M.5 15.500h12" stroke="#747474" stroke-width="1"/><path d="M12.500 4.500v11" stroke="#9c9c9c" stroke-width="1"/><circle cx="5" cy="7" r="2.700" fill="#e4f0fc" stroke="#4a8ad4" stroke-width="1.100"/><circle cx="5" cy="7" r="3.300" fill="none" stroke="#2a6ac0" stroke-width=".7" stroke-dasharray=".9 1.200"/><circle cx="4.700" cy="6.700" r=".8" fill="#1a2a44"/><circle cx="8.600" cy="10.900" r="2" fill="#eef6fe" stroke="#4a8ad4" stroke-width="1"/><path d="M7.700 10.900h1.800M8.600 10v1.800" stroke="#3a7fd0" stroke-width=".5"/></svg>
<span style="left:201.2px;top:209px;transform:scaleX(0.9633);transform-origin:0 0;">AppVIsvSubsystems64.dll</span>
<span style="left:440.5px;top:209px;transform:scaleX(0.9897);transform-origin:0 0;">7/18/2016 3:26 PM</span>
<span style="left:561px;top:209px;transform:scaleX(0.9716);transform-origin:0 0;">Application extension</span>
<span style="right:407px;top:209px;transform:scaleX(0.9010);transform-origin:100% 0;">43 KB</span>
</div>
<div class="w" style="left:157px;top:227px;width:836px;height:273px">
<div style="left:1px;top:1px;width:834px;height:1px;background:#ffffff;"></div>
<div style="left:1px;top:1px;width:1px;height:271px;background:#ffffff;"></div>
<div style="left:0px;top:272px;width:836px;height:1px;background:#424142;"></div>
<div style="left:835px;top:0px;width:1px;height:273px;background:#424142;"></div>
<div style="left:1px;top:271px;width:834px;height:1px;background:#848284;"></div>
<div style="left:834px;top:1px;width:1px;height:271px;background:#848284;"></div>
<div style="left:4px;top:4px;width:828px;height:18px;background:#848284;"></div>
<svg style="left:7px;top:5px" width="13" height="16" viewBox="0 0 13 16"><path d="M0.6 0.4h9.6q.8 0 .8 .8v.6h.6q.6 0 .6 .6v3.6h.3q.5 0 .5 .5v7q0 .5-.5 .5h-.6v.6q0 .5-.5 .5H6v.5q0 .4-.4 .4H3.4q-.4 0-.4-.4V15.200H.6q-.5 0-.5-.5V.9q0-.5 .5-.5z" fill="url(#gFold)"/><path d="M0.6 0.4h9.6q.8 0 .8 .8v.6h.6q.6 0 .6 .6v3.6h.3q.5 0 .5 .5v7q0 .5-.5 .5h-.6v.6q0 .5-.5 .5H6v.5q0 .4-.4 .4H3.4q-.4 0-.4-.4V15.200H.6q-.5 0-.5-.5V.9q0-.5 .5-.5z" fill="url(#gFoldV)"/><path d="M1.900 1.200l1.900 .5q.9 .3 .9 1.200V8.500H3V2.900z" fill="#fffef6"/><rect x="5.400" y="1" width=".9" height="14" fill="#cdb052" opacity=".55"/><rect x="10.800" y="8" width="1.200" height="2.600" fill="#f4f8fb"/><rect x="10.800" y="10.600" width="1.200" height="2.200" fill="#3a9ae0"/></svg>
<span style="left:24px;top:7px;transform:scaleX(1.0568);transform-origin:0 0;font-weight:bold;color:#d6d3ce;">en-us</span>
<div style="left:780px;top:6px;width:16px;height:14px;background:#d6d3ce;"></div>
<div style="left:780px;top:6px;width:15px;height:1px;background:#ffffff;"></div>
<div style="left:780px;top:6px;width:1px;height:13px;background:#ffffff;"></div>
<div style="left:780px;top:19px;width:16px;height:1px;background:#424142;"></div>
<div style="left:795px;top:6px;width:1px;height:14px;background:#424142;"></div>
<div style="left:781px;top:18px;width:14px;height:1px;background:#848284;"></div>
<div style="left:794px;top:7px;width:1px;height:12px;background:#848284;"></div>
<div style="left:784px;top:15px;width:6px;height:2px;background:#000;"></div>
<div style="left:796px;top:6px;width:16px;height:14px;background:#d6d3ce;"></div>
<div style="left:796px;top:6px;width:15px;height:1px;background:#ffffff;"></div>
<div style="left:796px;top:6px;width:1px;height:13px;background:#ffffff;"></div>
<div style="left:796px;top:19px;width:16px;height:1px;background:#424142;"></div>
<div style="left:811px;top:6px;width:1px;height:14px;background:#424142;"></div>
<div style="left:797px;top:18px;width:14px;height:1px;background:#848284;"></div>
<div style="left:810px;top:7px;width:1px;height:12px;background:#848284;"></div>
<div style="left:799px;top:8px;width:9px;height:9px;background:#000;"></div>
<div style="left:800px;top:10px;width:7px;height:6px;background:#d6d3ce;"></div>
<div style="left:814px;top:6px;width:16px;height:14px;background:#d6d3ce;"></div>
<div style="left:814px;top:6px;width:15px;height:1px;background:#ffffff;"></div>
<div style="left:814px;top:6px;width:1px;height:13px;background:#ffffff;"></div>
<div style="left:814px;top:19px;width:16px;height:1px;background:#424142;"></div>
<div style="left:829px;top:6px;width:1px;height:14px;background:#424142;"></div>
<div style="left:815px;top:18px;width:14px;height:1px;background:#848284;"></div>
<div style="left:828px;top:7px;width:1px;height:12px;background:#848284;"></div>
<svg style="left:818px;top:9px" width="8" height="7" shape-rendering="crispEdges" fill="#000"><rect x="0" y="0" width="2" height="1"/><rect x="6" y="0" width="2" height="1"/><rect x="1" y="1" width="2" height="1"/><rect x="5" y="1" width="2" height="1"/><rect x="2" y="2" width="2" height="1"/><rect x="4" y="2" width="2" height="1"/><rect x="3" y="3" width="2" height="1"/><rect x="3" y="3" width="2" height="1"/><rect x="4" y="4" width="2" height="1"/><rect x="2" y="4" width="2" height="1"/><rect x="5" y="5" width="2" height="1"/><rect x="1" y="5" width="2" height="1"/><rect x="6" y="6" width="2" height="1"/><rect x="0" y="6" width="2" height="1"/></svg>
<div style="left:4px;top:23px;width:828px;height:1px;background:#848284;"></div>
<div style="left:4px;top:23px;width:1px;height:36px;background:#848284;"></div>
<div style="left:5px;top:24px;width:826px;height:1px;background:#ffffff;"></div>
<div style="left:5px;top:24px;width:1px;height:34px;background:#ffffff;"></div>
<div style="left:5px;top:57px;width:826px;height:1px;background:#848284;"></div>
<div style="left:830px;top:24px;width:1px;height:34px;background:#848284;"></div>
<div style="left:4px;top:58px;width:828px;height:1px;background:#ffffff;"></div>
<div style="left:831px;top:23px;width:1px;height:36px;background:#ffffff;"></div>
<svg style="left:7px;top:27px" width="58" height="29" viewBox="0 0 58 29"><path d="M12.5 2.299999999999999Q28.6 4.6 44.7 2.299999999999999V26.9Q28.6 25.6 12.5 26.9z" fill="url(#gBridge)"/><circle cx="14.5" cy="14.6" r="12.7" fill="url(#gRing)"/><circle cx="14.5" cy="14.6" r="11.6" fill="url(#gDis)" stroke="#c4c9ce" stroke-width=".8"/><path d="M19.5 14.799999999999999H9.5M13.4 9.6L8.5 14.799999999999999L13.4 20.0" fill="none" stroke="#b4b3b0" stroke-width="3.6" stroke-linecap="round" stroke-linejoin="round" opacity="0.7"/><path d="M19.5 14.799999999999999H9.5M13.4 9.6L8.5 14.799999999999999L13.4 20.0" fill="none" stroke="#eeeeed" stroke-width="2.4" stroke-linecap="round" stroke-linejoin="round" opacity="1"/><circle cx="42.7" cy="14.6" r="12.7" fill="url(#gRing)"/><circle cx="42.7" cy="14.6" r="11.6" fill="url(#gDis)" stroke="#c4c9ce" stroke-width=".8"/><path d="M37.7 14.799999999999999H47.7M43.800000000000004 9.6L48.7 14.799999999999999L43.800000000000004 20.0" fill="none" stroke="#b4b3b0" stroke-width="3.6" stroke-linecap="round" stroke-linejoin="round" opacity="0.7"/><path d="M37.7 14.799999999999999H47.7M43.800000000000004 9.6L48.7 14.799999999999999L43.800000000000004 20.0" fill="none" stroke="#eeeeed" stroke-width="2.4" stroke-linecap="round" stroke-linejoin="round" opacity="1"/></svg>
<div style="left:78px;top:30px;width:504px;height:1px;background:#848284;"></div>
<div style="left:78px;top:30px;width:1px;height:22px;background:#848284;"></div>
<div style="left:78px;top:51px;width:504px;height:1px;background:#ffffff;"></div>
<div style="left:581px;top:30px;width:1px;height:22px;background:#ffffff;"></div>
<svg style="left:80px;top:33px" width="13" height="16" viewBox="0 0 13 16"><path d="M0.6 0.4h9.6q.8 0 .8 .8v.6h.6q.6 0 .6 .6v3.6h.3q.5 0 .5 .5v7q0 .5-.5 .5h-.6v.6q0 .5-.5 .5H6v.5q0 .4-.4 .4H3.4q-.4 0-.4-.4V15.200H.6q-.5 0-.5-.5V.9q0-.5 .5-.5z" fill="url(#gFold)"/><path d="M0.6 0.4h9.6q.8 0 .8 .8v.6h.6q.6 0 .6 .6v3.6h.3q.5 0 .5 .5v7q0 .5-.5 .5h-.6v.6q0 .5-.5 .5H6v.5q0 .4-.4 .4H3.4q-.4 0-.4-.4V15.200H.6q-.5 0-.5-.5V.9q0-.5 .5-.5z" fill="url(#gFoldV)"/><path d="M1.900 1.200l1.900 .5q.9 .3 .9 1.200V8.500H3V2.900z" fill="#fffef6"/><rect x="5.400" y="1" width=".9" height="14" fill="#cdb052" opacity=".55"/><rect x="10.800" y="8" width="1.200" height="2.600" fill="#f4f8fb"/><rect x="10.800" y="10.600" width="1.200" height="2.200" fill="#3a9ae0"/></svg>
<svg style="left:103px;top:39px" width="5" height="3" shape-rendering="crispEdges" fill="#000"><rect x="0" y="0" width="5" height="1"/><rect x="1" y="1" width="3" height="1"/><rect x="2" y="2" width="1" height="1"/></svg>
<span style="left:113.5px;top:34px;transform:scaleX(0.9882);transform-origin:0 0;">AppData</span>
<svg style="left:162px;top:39px" width="5" height="3" shape-rendering="crispEdges" fill="#000"><rect x="0" y="0" width="5" height="1"/><rect x="1" y="1" width="3" height="1"/><rect x="2" y="2" width="1" height="1"/></svg>
<span style="left:172.3px;top:34px;transform:scaleX(0.9127);transform-origin:0 0;">Local</span>
<svg style="left:203px;top:39px" width="5" height="3" shape-rendering="crispEdges" fill="#000"><rect x="0" y="0" width="5" height="1"/><rect x="1" y="1" width="3" height="1"/><rect x="2" y="2" width="1" height="1"/></svg>
<span style="left:213.5px;top:34px;transform:scaleX(0.9406);transform-origin:0 0;">Temp</span>
<svg style="left:246px;top:39px" width="5" height="3" shape-rendering="crispEdges" fill="#000"><rect x="0" y="0" width="5" height="1"/><rect x="1" y="1" width="3" height="1"/><rect x="2" y="2" width="1" height="1"/></svg>
<span style="left:256.5px;top:34px;">2</span>
<svg style="left:269px;top:39px" width="5" height="3" shape-rendering="crispEdges" fill="#000"><rect x="0" y="0" width="5" height="1"/><rect x="1" y="1" width="3" height="1"/><rect x="2" y="2" width="1" height="1"/></svg>
<span style="left:278.8px;top:34px;">Microsoft Office 15</span>
<svg style="left:377px;top:39px" width="5" height="3" shape-rendering="crispEdges" fill="#000"><rect x="0" y="0" width="5" height="1"/><rect x="1" y="1" width="3" height="1"/><rect x="2" y="2" width="1" height="1"/></svg>
<span style="left:387.29999999999995px;top:34px;transform:scaleX(1.0658);transform-origin:0 0;">root</span>
<svg style="left:414px;top:39px" width="5" height="3" shape-rendering="crispEdges" fill="#000"><rect x="0" y="0" width="5" height="1"/><rect x="1" y="1" width="3" height="1"/><rect x="2" y="2" width="1" height="1"/></svg>
<span style="left:424.20000000000005px;top:34px;transform:scaleX(0.9191);transform-origin:0 0;">mcxml</span>
<svg style="left:460px;top:39px" width="5" height="3" shape-rendering="crispEdges" fill="#000"><rect x="0" y="0" width="5" height="1"/><rect x="1" y="1" width="3" height="1"/><rect x="2" y="2" width="1" height="1"/></svg>
<span style="left:470.5px;top:34px;transform:scaleX(0.9740);transform-origin:0 0;">en-us</span>
<svg style="left:542px;top:39px" width="7" height="4" shape-rendering="crispEdges" fill="#000"><rect x="0" y="0" width="7" height="1"/><rect x="1" y="1" width="5" height="1"/><rect x="2" y="2" width="3" height="1"/><rect x="3" y="3" width="1" height="1"/></svg>
<svg style="left:560px;top:31px" width="21" height="19" viewBox="0 0 21 19"><rect x=".5" y=".5" width="20" height="18" rx="1.800" fill="url(#gGreen)" stroke="#8e8e92"/><rect x="1.500" y="1.500" width="18" height="16" rx="1" fill="none" stroke="#b4f0a8" stroke-width=".8" opacity=".75"/><path d="M10.200 2.800Q7.700 4 7.900 7.600L10.400 8.200 5.800 12.700 2.700 6.900 5 7.400Q4.500 3 8.800 1.500z" fill="#fff" stroke="#0c7c0c" stroke-width=".5"/><path d="M13.800 6.300L17.700 11.200H15.500Q15.100 14.900 12.300 16.500L10.300 15Q12.500 13.600 12.500 11.200H9.900z" fill="#fff" stroke="#0c7c0c" stroke-width=".5"/></svg>
<div style="left:586px;top:30px;width:223px;height:22px;background:#ffffff;"></div>
<div style="left:586px;top:30px;width:223px;height:1px;background:#848284;"></div>
<div style="left:586px;top:30px;width:1px;height:22px;background:#848284;"></div>
<div style="left:587px;top:31px;width:221px;height:1px;background:#424142;"></div>
<div style="left:587px;top:31px;width:1px;height:20px;background:#424142;"></div>
<div style="left:587px;top:50px;width:221px;height:1px;background:#d6d3ce;"></div>
<div style="left:807px;top:31px;width:1px;height:20px;background:#d6d3ce;"></div>
<div style="left:586px;top:51px;width:223px;height:1px;background:#ffffff;"></div>
<div style="left:808px;top:30px;width:1px;height:22px;background:#ffffff;"></div>
<span style="left:594.5px;top:35px;transform:scaleX(0.9630);transform-origin:0 0;">Search en-us</span>
<svg style="left:809px;top:30px" width="21" height="21" viewBox="0 0 21 21"><rect x=".5" y=".5" width="20" height="20" rx="1.800" fill="url(#gSrch)" stroke="#88888e"/><rect x="1.500" y="1.500" width="18" height="18" rx="1" fill="none" stroke="#eef4ff" stroke-width=".9" opacity=".8"/><path d="M5.200 15.200l4-3.900" stroke="#f2f2f2" stroke-width="2" stroke-linecap="round"/><circle cx="11.700" cy="8.400" r="3.700" fill="#0a22c0" stroke="#f2f2f2" stroke-width="1.800"/></svg>
<span style="left:11.2px;top:63px;transform:scaleX(0.9310);transform-origin:0 0;color:#848284;">File</span>
<span style="left:42.8px;top:63px;transform:scaleX(0.9496);transform-origin:0 0;color:#848284;">Edit</span>
<span style="left:77.8px;top:63px;transform:scaleX(0.9220);transform-origin:0 0;color:#848284;">View</span>
<span style="left:116px;top:63px;transform:scaleX(0.9619);transform-origin:0 0;color:#848284;">Tools</span>
<span style="left:156px;top:63px;transform:scaleX(0.9416);transform-origin:0 0;color:#848284;">Help</span>
<span style="left:16.7px;top:87px;transform:scaleX(0.9522);transform-origin:0 0;">Organize</span>
<svg style="left:68px;top:91px" width="7" height="4" shape-rendering="crispEdges" fill="#000"><rect x="0" y="0" width="7" height="1"/><rect x="1" y="1" width="5" height="1"/><rect x="2" y="2" width="3" height="1"/><rect x="3" y="3" width="1" height="1"/></svg>
<span style="left:95.4px;top:87px;transform:scaleX(0.9864);transform-origin:0 0;">Include in library</span>
<svg style="left:183px;top:91px" width="7" height="4" shape-rendering="crispEdges" fill="#000"><rect x="0" y="0" width="7" height="1"/><rect x="1" y="1" width="5" height="1"/><rect x="2" y="2" width="3" height="1"/><rect x="3" y="3" width="1" height="1"/></svg>
<span style="left:210.4px;top:87px;transform:scaleX(0.9814);transform-origin:0 0;">Share with</span>
<svg style="left:270px;top:91px" width="7" height="4" shape-rendering="crispEdges" fill="#000"><rect x="0" y="0" width="7" height="1"/><rect x="1" y="1" width="5" height="1"/><rect x="2" y="2" width="3" height="1"/><rect x="3" y="3" width="1" height="1"/></svg>
<span style="left:297px;top:87px;transform:scaleX(0.9891);transform-origin:0 0;">New folder</span>
<svg style="left:722px;top:86px" width="15" height="13" viewBox="0 0 15 13"><g shape-rendering="crispEdges"><rect x="0" y="0" width="5" height="13" fill="#a9bce0"/><rect x="1" y="1" width="3" height="3" fill="#fff"/><rect x="2" y="2" width="1" height="1" fill="#3a9a4a"/><rect x="6" y="2" width="4" height="1" fill="#4d6484"/><rect x="11" y="2" width="4" height="1" fill="#4d6484"/><rect x="1" y="5" width="3" height="3" fill="#fff"/><rect x="2" y="6" width="1" height="1" fill="#e02a1a"/><rect x="6" y="6" width="4" height="1" fill="#4d6484"/><rect x="11" y="6" width="4" height="1" fill="#4d6484"/><rect x="1" y="9" width="3" height="3" fill="#fff"/><rect x="2" y="10" width="1" height="1" fill="#2a5ae0"/><rect x="6" y="10" width="4" height="1" fill="#4d6484"/><rect x="11" y="10" width="4" height="1" fill="#4d6484"/></g></svg>
<svg style="left:751px;top:91px" width="7" height="4" shape-rendering="crispEdges" fill="#000"><rect x="0" y="0" width="7" height="1"/><rect x="1" y="1" width="5" height="1"/><rect x="2" y="2" width="3" height="1"/><rect x="3" y="3" width="1" height="1"/></svg>
<svg style="left:773px;top:86px" width="16" height="14" viewBox="0 0 16 14"><g shape-rendering="crispEdges"><rect x="0" y="0" width="16" height="14" fill="#6f8fba"/><rect x="1" y="1" width="8" height="2" fill="#f2f6fc"/><rect x="1" y="4" width="8" height="9" fill="#fffdff"/><rect x="10" y="1" width="5" height="12" fill="#a4e6f4"/></g><rect x="11" y="2" width="3" height="10" fill="url(#gPane)"/></svg>
<svg style="left:800.5px;top:84.5px" width="17" height="17" viewBox="0 0 17 17"><circle cx="8.500" cy="8.500" r="7.500" fill="#eef0f6" stroke="#84848c" stroke-width="1"/><circle cx="8.500" cy="8.500" r="6.100" fill="url(#gHelp)"/><path d="M4 6.500A5.500 5.500 0 0 1 8.500 3" fill="none" stroke="#6f8fe0" stroke-width="1.200" opacity=".8"/><text x="8.600" y="12.600" font-family="Liberation Sans" font-weight="bold" font-size="11.500" fill="#fff" text-anchor="middle">?</text></svg>
<div style="left:4px;top:109px;width:141px;height:160px;background:#fff;overflow:hidden">
<svg style="left:20px;top:10px" width="15" height="15" viewBox="0 0 15 15"><path d="M7.500 .6L9.400 5.300 14.500 5.600 10.600 8.900 11.900 14 7.500 11.200 3.100 14 4.400 8.900 .5 5.600 5.600 5.300z" fill="url(#gStar)" stroke="#ee8a1e" stroke-width=".9" stroke-linejoin="round"/><path d="M7.500 3.500l1.100 2.900 2.700 .2-2.100 1.800 .7 2.700-2.400-1.500z" fill="#fff3b0" opacity=".55"/></svg>
<span style="left:39.8px;top:13px;transform:scaleX(0.9949);transform-origin:0 0;">Favorites</span>
<svg style="left:20px;top:49px" width="16" height="14" viewBox="0 0 16 14"><path d="M1 2.200q0-1 1-1h3.600l1 1.200H14q1 0 1 1V11q0 1-1 1H2q-1 0-1-1z" fill="#ecd27a" stroke="#d6b34d" stroke-width=".6"/><rect x="1.800" y="1.600" width="2.600" height=".9" fill="#39c43e"/><path d="M1.600 4.200h12.800v6.600q0 .6-.6 .6H2.200q-.6 0-.6-.6z" fill="#f6e7a6"/><path d="M3 13.600V8.600q0-1.800 1.800-1.800h6.400q1.800 0 1.800 1.800v5H10.200V10.400q0-.6-.6-.6H6.400q-.6 0-.6 .6v3.200z" fill="#3d9be6" stroke="#1f6fc0" stroke-width=".6"/><path d="M3.600 8.600q0-1.200 1.200-1.200h6.400q1.200 0 1.200 1.200v.8H3.600z" fill="#8fd0f8" opacity=".8"/></svg>
<span style="left:39.8px;top:51px;transform:scaleX(0.9483);transform-origin:0 0;">Libraries</span>
<svg style="left:32px;top:67px" width="13" height="15" viewBox="0 0 13 15"><path d="M.5 .5h8.300l3.700 3.700V14.500H.5z" fill="#fff" stroke="#a2a2a2" stroke-width="1"/><path d="M8.800 .5v3.700h3.700" fill="#ececec" stroke="#a2a2a2" stroke-width=".8"/><g stroke="#8c9cd8" stroke-width=".9"><path d="M2.200 5.500h3.600M2.200 7.500h3.600M2.200 9.500h3.600M2.200 11.500h8.600"/></g><path d="M2.200 3.300h5" stroke="#2a8c8c" stroke-width="1"/><rect x="6.800" y="5.400" width="4" height="4.400" fill="#4a86c8"/><rect x="6.800" y="7.800" width="4" height="2" fill="#3f8f4a"/><path d="M.5 14.500h12" stroke="#777" stroke-width="1"/></svg>
<span style="left:49.9px;top:70px;transform:scaleX(0.9527);transform-origin:0 0;">Documents</span>
<svg style="left:32px;top:86px" width="13" height="16" viewBox="0 0 13 16"><path d="M6.500 .4h1.300q.5 2 2.600 3.500 2.700 2 1.500 5.700-.1-2.700-2.300-3.700-1-.4-1.800-.5V12.500z" fill="url(#gNote)" stroke="#1d66bc" stroke-width=".4"/><ellipse cx="4.100" cy="12.400" rx="3.800" ry="3.100" fill="url(#gNote)" stroke="#1d66bc" stroke-width=".4"/><ellipse cx="3.400" cy="11.400" rx="2" ry="1" fill="#a8d8fa" opacity=".75"/></svg>
<span style="left:49.9px;top:89px;transform:scaleX(0.9226);transform-origin:0 0;">Music</span>
<svg style="left:29.8px;top:107px" width="16" height="13" viewBox="0 0 16 13"><rect x=".5" y=".5" width="15" height="12" rx="1" fill="#f4f4f4" stroke="#8a8a8a"/><rect x="2" y="2" width="12" height="9" fill="#bfe3f2"/><path d="M2 6.500q3-2.500 6-.8t6-1.200V9H2z" fill="#3b8a86"/><rect x="2" y="8.200" width="12" height="2.800" fill="#2d6fc4"/><rect x="2" y="7.600" width="12" height=".9" fill="#2f8a4e"/></svg>
<span style="left:49.9px;top:108px;transform:scaleX(0.9689);transform-origin:0 0;">Pictures</span>
<svg style="left:31px;top:125px" width="14" height="15" viewBox="0 0 14 15"><rect x=".3" y=".3" width="13.400" height="14.400" fill="#20302e" stroke="#2e8a86" stroke-width=".6"/><rect x="3" y="1" width="8" height="6" fill="#3f9fec"/><rect x="3" y="8" width="8" height="6" fill="#3f9fec"/><path d="M3 1h2.500L3 4zM11 4.500V7H8.500z" fill="#c8603a"/><path d="M3 8h2L3 10.500zM11 11v3H7.500l2-2z" fill="#d08a3a"/><path d="M3 5.500l2.500 1.500H3zM3 12.500l2 1.500H3z" fill="#2a7a4a"/><g fill="#fff"><rect x="1" y="1.500" width="1.200" height="1.400"/><rect x="1" y="4.500" width="1.200" height="1.400"/><rect x="1" y="7.500" width="1.200" height="1.400"/><rect x="1" y="10.500" width="1.200" height="1.400"/><rect x="1" y="13" width="1.200" height="1.200"/><rect x="11.800" y="1.500" width="1.200" height="1.400"/><rect x="11.800" y="4.500" width="1.200" height="1.400"/><rect x="11.800" y="7.500" width="1.200" height="1.400"/><rect x="11.800" y="10.500" width="1.200" height="1.400"/><rect x="11.800" y="13" width="1.200" height="1.200"/></g></svg>
<span style="left:49.9px;top:127px;transform:scaleX(0.9272);transform-origin:0 0;">Videos</span>
<div style="left:1px;top:161px;width:140px;height:19px;background:#d6d3ce;"></div>
<svg style="left:20px;top:163px" width="16" height="14" viewBox="0 0 16 14"><rect x=".6" y="5.200" width="2" height="8" fill="#ececec" stroke="#9a9a9a" stroke-width=".6"/><rect x="1.100" y="5.800" width="1" height="1.600" fill="#2fc02f"/><rect x="4" y=".8" width="11.600" height="10.400" fill="#e6e6e2" stroke="#a4a4a0" stroke-width=".7"/><rect x="5.200" y="2" width="9.200" height="7.800" fill="url(#gMon)"/><path d="M9.400 2h5v5.500z" fill="#8fa8ff" opacity=".75"/><rect x="8.400" y="11.400" width="2.800" height="1.400" fill="#c0c0bc"/><rect x="6.200" y="12.600" width="7.200" height="1.100" fill="#dededa" stroke="#a4a4a0" stroke-width=".4"/><rect x=".4" y="13.200" width="2.400" height=".7" fill="#8a8a8a"/></svg>
<span style="left:39.8px;top:165px;transform:scaleX(0.9525);transform-origin:0 0;">Computer</span>
<svg style="left:20px;top:200px" width="16" height="16" viewBox="0 0 16 16"><circle cx="5.200" cy="5.300" r="5" fill="#2a62e4"/><path d="M1.600 3q2-2.800 4.800-2.400 1.600 1.400-.4 3-2.600 .6-2.600 2.600T1.500 8.400Q-.2 5.600 1.600 3z" fill="#34d83a"/><path d="M5.600 8.400q2 .4 1.600 2-2 .6-3.200-1z" fill="#34d83a"/><path d="M7.400 1.400q2 1 2.600 3l-1.600-.4z" fill="#7fd0ff"/><rect x="6.400" y="4.600" width="9.400" height="8" fill="#3a4ad8" stroke="#2a38b8" stroke-width=".6"/><rect x="7.400" y="5.600" width="7.400" height="6" fill="url(#gMon)"/><path d="M10.500 5.600h4.300v4z" fill="#7f9aff" opacity=".75"/><rect x="10.400" y="12.800" width="1.400" height="1.800" fill="#5060c0"/><path d="M8.600 15.700l2.500-1.400 2.500 1.400z" fill="#5060b8"/></svg>
<span style="left:39.8px;top:203px;transform:scaleX(0.9916);transform-origin:0 0;">Network</span>
</div>
<svg style="left:145px;top:109px" width="16" height="160"><rect width="16" height="160" fill="url(#dith)"/></svg>
<div style="left:145px;top:109px;width:16px;height:16px;background:#d6d3ce;"></div>
<div style="left:146px;top:110px;width:13px;height:1px;background:#ffffff;"></div>
<div style="left:146px;top:110px;width:1px;height:13px;background:#ffffff;"></div>
<div style="left:145px;top:124px;width:16px;height:1px;background:#424142;"></div>
<div style="left:160px;top:109px;width:1px;height:16px;background:#424142;"></div>
<div style="left:146px;top:123px;width:14px;height:1px;background:#848284;"></div>
<div style="left:159px;top:110px;width:1px;height:14px;background:#848284;"></div>
<svg style="left:149px;top:115px" width="7" height="4" shape-rendering="crispEdges" fill="#000"><rect x="3" y="0" width="1" height="1"/><rect x="2" y="1" width="3" height="1"/><rect x="1" y="2" width="5" height="1"/><rect x="0" y="3" width="7" height="1"/></svg>
<div style="left:145px;top:253px;width:16px;height:16px;background:#d6d3ce;"></div>
<div style="left:146px;top:254px;width:13px;height:1px;background:#ffffff;"></div>
<div style="left:146px;top:254px;width:1px;height:13px;background:#ffffff;"></div>
<div style="left:145px;top:268px;width:16px;height:1px;background:#424142;"></div>
<div style="left:160px;top:253px;width:1px;height:16px;background:#424142;"></div>
<div style="left:146px;top:267px;width:14px;height:1px;background:#848284;"></div>
<div style="left:159px;top:254px;width:1px;height:14px;background:#848284;"></div>
<svg style="left:149px;top:259px" width="7" height="4" shape-rendering="crispEdges" fill="#000"><rect x="0" y="0" width="7" height="1"/><rect x="1" y="1" width="5" height="1"/><rect x="2" y="2" width="3" height="1"/><rect x="3" y="3" width="1" height="1"/></svg>
<div style="left:145px;top:125px;width:16px;height:112px;background:#d6d3ce;"></div>
<div style="left:146px;top:126px;width:13px;height:1px;background:#ffffff;"></div>
<div style="left:146px;top:126px;width:1px;height:109px;background:#ffffff;"></div>
<div style="left:145px;top:236px;width:16px;height:1px;background:#424142;"></div>
<div style="left:160px;top:125px;width:1px;height:112px;background:#424142;"></div>
<div style="left:146px;top:235px;width:14px;height:1px;background:#848284;"></div>
<div style="left:159px;top:126px;width:1px;height:110px;background:#848284;"></div>
<div style="left:164px;top:109px;width:668px;height:160px;background:#ffffff;"></div>
<div style="left:164px;top:109px;width:668px;height:22px;background:#d6d3ce;"></div>
<div style="left:164px;top:129px;width:668px;height:1px;background:#848284;"></div>
<div style="left:164px;top:130px;width:668px;height:1px;background:#424142;"></div>
<div style="left:164px;top:109px;width:272px;height:1px;background:#ffffff;"></div>
<div style="left:164px;top:109px;width:1px;height:20px;background:#ffffff;"></div>
<div style="left:434px;top:110px;width:1px;height:20px;background:#848284;"></div>
<div style="left:435px;top:109px;width:1px;height:22px;background:#424142;"></div>
<span style="left:179.3px;top:115px;transform:scaleX(0.9373);transform-origin:0 0;">Name</span>
<div style="left:436px;top:109px;width:120px;height:1px;background:#ffffff;"></div>
<div style="left:436px;top:109px;width:1px;height:20px;background:#ffffff;"></div>
<div style="left:554px;top:110px;width:1px;height:20px;background:#848284;"></div>
<div style="left:555px;top:109px;width:1px;height:22px;background:#424142;"></div>
<span style="left:440.2px;top:115px;transform:scaleX(0.9872);transform-origin:0 0;">Date modified</span>
<div style="left:556px;top:109px;width:120px;height:1px;background:#ffffff;"></div>
<div style="left:556px;top:109px;width:1px;height:20px;background:#ffffff;"></div>
<div style="left:674px;top:110px;width:1px;height:20px;background:#848284;"></div>
<div style="left:675px;top:109px;width:1px;height:22px;background:#424142;"></div>
<span style="left:561px;top:115px;transform:scaleX(1.0064);transform-origin:0 0;">Type</span>
<div style="left:676px;top:109px;width:79px;height:1px;background:#ffffff;"></div>
<div style="left:676px;top:109px;width:1px;height:20px;background:#ffffff;"></div>
<div style="left:753px;top:110px;width:1px;height:20px;background:#848284;"></div>
<div style="left:754px;top:109px;width:1px;height:22px;background:#424142;"></div>
<span style="left:681px;top:115px;transform:scaleX(0.9113);transform-origin:0 0;">Size</span>
<div style="left:755px;top:109px;width:77px;height:1px;background:#ffffff;"></div>
<div style="left:755px;top:109px;width:1px;height:20px;background:#ffffff;"></div>
<div style="left:830px;top:110px;width:1px;height:20px;background:#848284;"></div>
<div style="left:831px;top:109px;width:1px;height:22px;background:#424142;"></div>
<svg style="left:212px;top:118px" width="5" height="3" shape-rendering="crispEdges" fill="#848284"><rect x="2" y="0" width="1" height="1"/><rect x="1" y="1" width="3" height="1"/><rect x="0" y="2" width="5" height="1"/></svg>
<svg style="left:184px;top:140px" width="13" height="16" viewBox="0 0 13 16"><path d="M.5 .5h8.500l3.500 3.500V15.500H.5z" fill="#fdfdfd" stroke="#b6b6b6" stroke-width="1"/><path d="M9 .5v3.500h3.500" fill="#f2f2f2" stroke="#b6b6b6" stroke-width=".8"/><path d="M.5 15.500h12" stroke="#747474" stroke-width="1"/><path d="M12.500 4.500v11" stroke="#9c9c9c" stroke-width="1"/><path d="M3.800 11.700l5.600 0V5.200l.6-.2v6.900l-6.200 .2z" fill="#dcc9a0"/><path d="M3 4.300l6-.4q.4 3.600 0 7.300l-6.800-.3Q3.200 7.500 3 4.300z" fill="url(#gSky)"/></svg>
<span style="left:200.2px;top:143px;transform:scaleX(0.9598);transform-origin:0 0;">LyncMUI.msi.zip_LyncMUI.mcxml</span>
<span style="left:440.5px;top:143px;transform:scaleX(0.9897);transform-origin:0 0;">7/18/2016 3:26 PM</span>
<span style="left:561px;top:143px;transform:scaleX(0.8819);transform-origin:0 0;">MCXML File</span>
<span style="right:87px;top:143px;transform:scaleX(0.9010);transform-origin:100% 0;">80 KB</span>
<svg style="left:184px;top:162px" width="13" height="16" viewBox="0 0 13 16"><path d="M.5 .5h8.500l3.500 3.500V15.500H.5z" fill="#fdfdfd" stroke="#b6b6b6" stroke-width="1"/><path d="M9 .5v3.500h3.500" fill="#f2f2f2" stroke="#b6b6b6" stroke-width=".8"/><path d="M.5 15.500h12" stroke="#747474" stroke-width="1"/><path d="M12.500 4.500v11" stroke="#9c9c9c" stroke-width="1"/><path d="M3.800 11.700l5.600 0V5.200l.6-.2v6.900l-6.200 .2z" fill="#dcc9a0"/><path d="M3 4.300l6-.4q.4 3.600 0 7.300l-6.800-.3Q3.200 7.500 3 4.300z" fill="url(#gSky)"/></svg>
<span style="left:200.2px;top:165px;transform:scaleX(0.9609);transform-origin:0 0;">LyncMUI.msi.zip_LyncMUI_WoW6432.mcxml</span>
<span style="left:440.5px;top:165px;transform:scaleX(0.9897);transform-origin:0 0;">7/18/2016 3:26 PM</span>
<span style="left:561px;top:165px;transform:scaleX(0.8819);transform-origin:0 0;">MCXML File</span>
<span style="right:87px;top:165px;transform:scaleX(0.9010);transform-origin:100% 0;">80 KB</span>
</div>
<div class="w" style="left:243px;top:430px;width:836px;height:273px">
<div style="left:1px;top:1px;width:834px;height:1px;background:#ffffff;"></div>
<div style="left:1px;top:1px;width:1px;height:271px;background:#ffffff;"></div>
<div style="left:0px;top:272px;width:836px;height:1px;background:#424142;"></div>
<div style="left:835px;top:0px;width:1px;height:273px;background:#424142;"></div>
<div style="left:1px;top:271px;width:834px;height:1px;background:#848284;"></div>
<div style="left:834px;top:1px;width:1px;height:271px;background:#848284;"></div>
<div style="left:4px;top:4px;width:828px;height:18px;background:#08246b;"></div>
<svg style="left:7px;top:5px" width="13" height="16" viewBox="0 0 13 16"><path d="M0.6 0.4h9.6q.8 0 .8 .8v.6h.6q.6 0 .6 .6v3.6h.3q.5 0 .5 .5v7q0 .5-.5 .5h-.6v.6q0 .5-.5 .5H6v.5q0 .4-.4 .4H3.4q-.4 0-.4-.4V15.200H.6q-.5 0-.5-.5V.9q0-.5 .5-.5z" fill="url(#gFold)"/><path d="M0.6 0.4h9.6q.8 0 .8 .8v.6h.6q.6 0 .6 .6v3.6h.3q.5 0 .5 .5v7q0 .5-.5 .5h-.6v.6q0 .5-.5 .5H6v.5q0 .4-.4 .4H3.4q-.4 0-.4-.4V15.200H.6q-.5 0-.5-.5V.9q0-.5 .5-.5z" fill="url(#gFoldV)"/><path d="M1.900 1.200l1.900 .5q.9 .3 .9 1.200V8.500H3V2.900z" fill="#fffef6"/><rect x="5.400" y="1" width=".9" height="14" fill="#cdb052" opacity=".55"/><rect x="10.800" y="8" width="1.200" height="2.600" fill="#f4f8fb"/><rect x="10.800" y="10.600" width="1.200" height="2.200" fill="#3a9ae0"/></svg>
<span style="left:24px;top:7px;transform:scaleX(1.0817);transform-origin:0 0;font-weight:bold;color:#fff;">x-none</span>
<div style="left:780px;top:6px;width:16px;height:14px;background:#d6d3ce;"></div>
<div style="left:780px;top:6px;width:15px;height:1px;background:#ffffff;"></div>
<div style="left:780px;top:6px;width:1px;height:13px;background:#ffffff;"></div>
<div style="left:780px;top:19px;width:16px;height:1px;background:#424142;"></div>
<div style="left:795px;top:6px;width:1px;height:14px;background:#424142;"></div>
<div style="left:781px;top:18px;width:14px;height:1px;background:#848284;"></div>
<div style="left:794px;top:7px;width:1px;height:12px;background:#848284;"></div>
<div style="left:784px;top:15px;width:6px;height:2px;background:#000;"></div>
<div style="left:796px;top:6px;width:16px;height:14px;background:#d6d3ce;"></div>
<div style="left:796px;top:6px;width:15px;height:1px;background:#ffffff;"></div>
<div style="left:796px;top:6px;width:1px;height:13px;background:#ffffff;"></div>
<div style="left:796px;top:19px;width:16px;height:1px;background:#424142;"></div>
<div style="left:811px;top:6px;width:1px;height:14px;background:#424142;"></div>
<div style="left:797px;top:18px;width:14px;height:1px;background:#848284;"></div>
<div style="left:810px;top:7px;width:1px;height:12px;background:#848284;"></div>
<div style="left:799px;top:8px;width:9px;height:9px;background:#000;"></div>
<div style="left:800px;top:10px;width:7px;height:6px;background:#d6d3ce;"></div>
<div style="left:814px;top:6px;width:16px;height:14px;background:#d6d3ce;"></div>
<div style="left:814px;top:6px;width:15px;height:1px;background:#ffffff;"></div>
<div style="left:814px;top:6px;width:1px;height:13px;background:#ffffff;"></div>
<div style="left:814px;top:19px;width:16px;height:1px;background:#424142;"></div>
<div style="left:829px;top:6px;width:1px;height:14px;background:#424142;"></div>
<div style="left:815px;top:18px;width:14px;height:1px;background:#848284;"></div>
<div style="left:828px;top:7px;width:1px;height:12px;background:#848284;"></div>
<svg style="left:818px;top:9px" width="8" height="7" shape-rendering="crispEdges" fill="#000"><rect x="0" y="0" width="2" height="1"/><rect x="6" y="0" width="2" height="1"/><rect x="1" y="1" width="2" height="1"/><rect x="5" y="1" width="2" height="1"/><rect x="2" y="2" width="2" height="1"/><rect x="4" y="2" width="2" height="1"/><rect x="3" y="3" width="2" height="1"/><rect x="3" y="3" width="2" height="1"/><rect x="4" y="4" width="2" height="1"/><rect x="2" y="4" width="2" height="1"/><rect x="5" y="5" width="2" height="1"/><rect x="1" y="5" width="2" height="1"/><rect x="6" y="6" width="2" height="1"/><rect x="0" y="6" width="2" height="1"/></svg>
<div style="left:4px;top:23px;width:828px;height:1px;background:#848284;"></div>
<div style="left:4px;top:23px;width:1px;height:36px;background:#848284;"></div>
<div style="left:5px;top:24px;width:826px;height:1px;background:#ffffff;"></div>
<div style="left:5px;top:24px;width:1px;height:34px;background:#ffffff;"></div>
<div style="left:5px;top:57px;width:826px;height:1px;background:#848284;"></div>
<div style="left:830px;top:24px;width:1px;height:34px;background:#848284;"></div>
<div style="left:4px;top:58px;width:828px;height:1px;background:#ffffff;"></div>
<div style="left:831px;top:23px;width:1px;height:36px;background:#ffffff;"></div>
<svg style="left:7px;top:27px" width="58" height="29" viewBox="0 0 58 29"><path d="M12.5 2.299999999999999Q28.6 4.6 44.7 2.299999999999999V26.9Q28.6 25.6 12.5 26.9z" fill="url(#gBridge)"/><circle cx="14.5" cy="14.6" r="12.7" fill="url(#gRing)"/><circle cx="14.5" cy="14.6" r="11.6" fill="url(#gDis)" stroke="#c4c9ce" stroke-width=".8"/><path d="M19.5 14.799999999999999H9.5M13.4 9.6L8.5 14.799999999999999L13.4 20.0" fill="none" stroke="#b4b3b0" stroke-width="3.6" stroke-linecap="round" stroke-linejoin="round" opacity="0.7"/><path d="M19.5 14.799999999999999H9.5M13.4 9.6L8.5 14.799999999999999L13.4 20.0" fill="none" stroke="#eeeeed" stroke-width="2.4" stroke-linecap="round" stroke-linejoin="round" opacity="1"/><circle cx="42.7" cy="14.6" r="12.7" fill="url(#gRing)"/><circle cx="42.7" cy="14.6" r="11.6" fill="url(#gDis)" stroke="#c4c9ce" stroke-width=".8"/><path d="M37.7 14.799999999999999H47.7M43.800000000000004 9.6L48.7 14.799999999999999L43.800000000000004 20.0" fill="none" stroke="#b4b3b0" stroke-width="3.6" stroke-linecap="round" stroke-linejoin="round" opacity="0.7"/><path d="M37.7 14.799999999999999H47.7M43.800000000000004 9.6L48.7 14.799999999999999L43.800000000000004 20.0" fill="none" stroke="#eeeeed" stroke-width="2.4" stroke-linecap="round" stroke-linejoin="round" opacity="1"/></svg>
<div style="left:78px;top:30px;width:504px;height:1px;background:#848284;"></div>
<div style="left:78px;top:30px;width:1px;height:22px;background:#848284;"></div>
<div style="left:78px;top:51px;width:504px;height:1px;background:#ffffff;"></div>
<div style="left:581px;top:30px;width:1px;height:22px;background:#ffffff;"></div>
<svg style="left:80px;top:33px" width="13" height="16" viewBox="0 0 13 16"><path d="M0.6 0.4h9.6q.8 0 .8 .8v.6h.6q.6 0 .6 .6v3.6h.3q.5 0 .5 .5v7q0 .5-.5 .5h-.6v.6q0 .5-.5 .5H6v.5q0 .4-.4 .4H3.4q-.4 0-.4-.4V15.200H.6q-.5 0-.5-.5V.9q0-.5 .5-.5z" fill="url(#gFold)"/><path d="M0.6 0.4h9.6q.8 0 .8 .8v.6h.6q.6 0 .6 .6v3.6h.3q.5 0 .5 .5v7q0 .5-.5 .5h-.6v.6q0 .5-.5 .5H6v.5q0 .4-.4 .4H3.4q-.4 0-.4-.4V15.200H.6q-.5 0-.5-.5V.9q0-.5 .5-.5z" fill="url(#gFoldV)"/><path d="M1.900 1.200l1.900 .5q.9 .3 .9 1.200V8.500H3V2.900z" fill="#fffef6"/><rect x="5.400" y="1" width=".9" height="14" fill="#cdb052" opacity=".55"/><rect x="10.800" y="8" width="1.200" height="2.600" fill="#f4f8fb"/><rect x="10.800" y="10.600" width="1.200" height="2.200" fill="#3a9ae0"/></svg>
<svg style="left:103px;top:39px" width="5" height="3" shape-rendering="crispEdges" fill="#000"><rect x="0" y="0" width="5" height="1"/><rect x="1" y="1" width="3" height="1"/><rect x="2" y="2" width="1" height="1"/></svg>
<span style="left:113.19999999999999px;top:34px;transform:scaleX(0.9241);transform-origin:0 0;">Local</span>
<svg style="left:144px;top:39px" width="5" height="3" shape-rendering="crispEdges" fill="#000"><rect x="0" y="0" width="5" height="1"/><rect x="1" y="1" width="3" height="1"/><rect x="2" y="2" width="1" height="1"/></svg>
<span style="left:155px;top:34px;transform:scaleX(0.9406);transform-origin:0 0;">Temp</span>
<svg style="left:186.5px;top:39px" width="5" height="3" shape-rendering="crispEdges" fill="#000"><rect x="0" y="0" width="5" height="1"/><rect x="1" y="1" width="3" height="1"/><rect x="2" y="2" width="1" height="1"/></svg>
<span style="left:197.3px;top:34px;">2</span>
<svg style="left:210px;top:39px" width="5" height="3" shape-rendering="crispEdges" fill="#000"><rect x="0" y="0" width="5" height="1"/><rect x="1" y="1" width="3" height="1"/><rect x="2" y="2" width="1" height="1"/></svg>
<span style="left:220.2px;top:34px;">Microsoft Office 15</span>
<svg style="left:318px;top:39px" width="5" height="3" shape-rendering="crispEdges" fill="#000"><rect x="0" y="0" width="5" height="1"/><rect x="1" y="1" width="3" height="1"/><rect x="2" y="2" width="1" height="1"/></svg>
<span style="left:328.20000000000005px;top:34px;transform:scaleX(1.0658);transform-origin:0 0;">root</span>
<svg style="left:355px;top:39px" width="5" height="3" shape-rendering="crispEdges" fill="#000"><rect x="0" y="0" width="5" height="1"/><rect x="1" y="1" width="3" height="1"/><rect x="2" y="2" width="1" height="1"/></svg>
<span style="left:365px;top:34px;transform:scaleX(0.9191);transform-origin:0 0;">mcxml</span>
<svg style="left:401px;top:39px" width="5" height="3" shape-rendering="crispEdges" fill="#000"><rect x="0" y="0" width="5" height="1"/><rect x="1" y="1" width="3" height="1"/><rect x="2" y="2" width="1" height="1"/></svg>
<span style="left:411.70000000000005px;top:34px;transform:scaleX(0.9902);transform-origin:0 0;">x-none</span>
<svg style="left:542px;top:39px" width="7" height="4" shape-rendering="crispEdges" fill="#000"><rect x="0" y="0" width="7" height="1"/><rect x="1" y="1" width="5" height="1"/><rect x="2" y="2" width="3" height="1"/><rect x="3" y="3" width="1" height="1"/></svg>
<svg style="left:560px;top:31px" width="21" height="19" viewBox="0 0 21 19"><rect x=".5" y=".5" width="20" height="18" rx="1.800" fill="url(#gGreen)" stroke="#8e8e92"/><rect x="1.500" y="1.500" width="18" height="16" rx="1" fill="none" stroke="#b4f0a8" stroke-width=".8" opacity=".75"/><path d="M10.200 2.800Q7.700 4 7.900 7.600L10.400 8.200 5.800 12.700 2.700 6.900 5 7.400Q4.500 3 8.800 1.500z" fill="#fff" stroke="#0c7c0c" stroke-width=".5"/><path d="M13.800 6.300L17.700 11.200H15.500Q15.100 14.900 12.300 16.500L10.300 15Q12.500 13.600 12.500 11.200H9.900z" fill="#fff" stroke="#0c7c0c" stroke-width=".5"/></svg>
<div style="left:586px;top:30px;width:223px;height:22px;background:#ffffff;"></div>
<div style="left:586px;top:30px;width:223px;height:1px;background:#848284;"></div>
<div style="left:586px;top:30px;width:1px;height:22px;background:#848284;"></div>
<div style="left:587px;top:31px;width:221px;height:1px;background:#424142;"></div>
<div style="left:587px;top:31px;width:1px;height:20px;background:#424142;"></div>
<div style="left:587px;top:50px;width:221px;height:1px;background:#d6d3ce;"></div>
<div style="left:807px;top:31px;width:1px;height:20px;background:#d6d3ce;"></div>
<div style="left:586px;top:51px;width:223px;height:1px;background:#ffffff;"></div>
<div style="left:808px;top:30px;width:1px;height:22px;background:#ffffff;"></div>
<span style="left:594.5px;top:35px;transform:scaleX(0.9505);transform-origin:0 0;">Search x-none</span>
<svg style="left:809px;top:30px" width="21" height="21" viewBox="0 0 21 21"><rect x=".5" y=".5" width="20" height="20" rx="1.800" fill="url(#gSrch)" stroke="#88888e"/><rect x="1.500" y="1.500" width="18" height="18" rx="1" fill="none" stroke="#eef4ff" stroke-width=".9" opacity=".8"/><path d="M5.200 15.200l4-3.900" stroke="#f2f2f2" stroke-width="2" stroke-linecap="round"/><circle cx="11.700" cy="8.400" r="3.700" fill="#0a22c0" stroke="#f2f2f2" stroke-width="1.800"/></svg>
<span style="left:11.2px;top:63px;transform:scaleX(0.9310);transform-origin:0 0;">File</span>
<span style="left:42.8px;top:63px;transform:scaleX(0.9496);transform-origin:0 0;">Edit</span>
<span style="left:77.8px;top:63px;transform:scaleX(0.9220);transform-origin:0 0;">View</span>
<span style="left:116px;top:63px;transform:scaleX(0.9619);transform-origin:0 0;">Tools</span>
<span style="left:156px;top:63px;transform:scaleX(0.9416);transform-origin:0 0;">Help</span>
<span style="left:16.7px;top:87px;transform:scaleX(0.9522);transform-origin:0 0;">Organize</span>
<svg style="left:68px;top:91px" width="7" height="4" shape-rendering="crispEdges" fill="#000"><rect x="0" y="0" width="7" height="1"/><rect x="1" y="1" width="5" height="1"/><rect x="2" y="2" width="3" height="1"/><rect x="3" y="3" width="1" height="1"/></svg>
<span style="left:95.4px;top:87px;transform:scaleX(0.9864);transform-origin:0 0;">Include in library</span>
<svg style="left:183px;top:91px" width="7" height="4" shape-rendering="crispEdges" fill="#000"><rect x="0" y="0" width="7" height="1"/><rect x="1" y="1" width="5" height="1"/><rect x="2" y="2" width="3" height="1"/><rect x="3" y="3" width="1" height="1"/></svg>
<span style="left:210.4px;top:87px;transform:scaleX(0.9814);transform-origin:0 0;">Share with</span>
<svg style="left:270px;top:91px" width="7" height="4" shape-rendering="crispEdges" fill="#000"><rect x="0" y="0" width="7" height="1"/><rect x="1" y="1" width="5" height="1"/><rect x="2" y="2" width="3" height="1"/><rect x="3" y="3" width="1" height="1"/></svg>
<span style="left:297px;top:87px;transform:scaleX(0.9891);transform-origin:0 0;">New folder</span>
<svg style="left:722px;top:86px" width="15" height="13" viewBox="0 0 15 13"><g shape-rendering="crispEdges"><rect x="0" y="0" width="5" height="13" fill="#a9bce0"/><rect x="1" y="1" width="3" height="3" fill="#fff"/><rect x="2" y="2" width="1" height="1" fill="#3a9a4a"/><rect x="6" y="2" width="4" height="1" fill="#4d6484"/><rect x="11" y="2" width="4" height="1" fill="#4d6484"/><rect x="1" y="5" width="3" height="3" fill="#fff"/><rect x="2" y="6" width="1" height="1" fill="#e02a1a"/><rect x="6" y="6" width="4" height="1" fill="#4d6484"/><rect x="11" y="6" width="4" height="1" fill="#4d6484"/><rect x="1" y="9" width="3" height="3" fill="#fff"/><rect x="2" y="10" width="1" height="1" fill="#2a5ae0"/><rect x="6" y="10" width="4" height="1" fill="#4d6484"/><rect x="11" y="10" width="4" height="1" fill="#4d6484"/></g></svg>
<svg style="left:751px;top:91px" width="7" height="4" shape-rendering="crispEdges" fill="#000"><rect x="0" y="0" width="7" height="1"/><rect x="1" y="1" width="5" height="1"/><rect x="2" y="2" width="3" height="1"/><rect x="3" y="3" width="1" height="1"/></svg>
<svg style="left:773px;top:86px" width="16" height="14" viewBox="0 0 16 14"><g shape-rendering="crispEdges"><rect x="0" y="0" width="16" height="14" fill="#6f8fba"/><rect x="1" y="1" width="8" height="2" fill="#f2f6fc"/><rect x="1" y="4" width="8" height="9" fill="#fffdff"/><rect x="10" y="1" width="5" height="12" fill="#a4e6f4"/></g><rect x="11" y="2" width="3" height="10" fill="url(#gPane)"/></svg>
<svg style="left:800.5px;top:84.5px" width="17" height="17" viewBox="0 0 17 17"><circle cx="8.500" cy="8.500" r="7.500" fill="#eef0f6" stroke="#84848c" stroke-width="1"/><circle cx="8.500" cy="8.500" r="6.100" fill="url(#gHelp)"/><path d="M4 6.500A5.500 5.500 0 0 1 8.500 3" fill="none" stroke="#6f8fe0" stroke-width="1.200" opacity=".8"/><text x="8.600" y="12.600" font-family="Liberation Sans" font-weight="bold" font-size="11.500" fill="#fff" text-anchor="middle">?</text></svg>
<div style="left:4px;top:109px;width:141px;height:160px;background:#fff;overflow:hidden">
<svg style="left:20px;top:-56px" width="15" height="15" viewBox="0 0 15 15"><path d="M7.500 .6L9.400 5.300 14.500 5.600 10.600 8.900 11.900 14 7.500 11.200 3.100 14 4.400 8.900 .5 5.600 5.600 5.300z" fill="url(#gStar)" stroke="#ee8a1e" stroke-width=".9" stroke-linejoin="round"/><path d="M7.500 3.500l1.100 2.900 2.700 .2-2.100 1.800 .7 2.700-2.400-1.500z" fill="#fff3b0" opacity=".55"/></svg>
<span style="left:39.8px;top:-53px;transform:scaleX(0.9949);transform-origin:0 0;">Favorites</span>
<svg style="left:20px;top:-17px" width="16" height="14" viewBox="0 0 16 14"><path d="M1 2.200q0-1 1-1h3.600l1 1.200H14q1 0 1 1V11q0 1-1 1H2q-1 0-1-1z" fill="#ecd27a" stroke="#d6b34d" stroke-width=".6"/><rect x="1.800" y="1.600" width="2.600" height=".9" fill="#39c43e"/><path d="M1.600 4.200h12.800v6.600q0 .6-.6 .6H2.200q-.6 0-.6-.6z" fill="#f6e7a6"/><path d="M3 13.600V8.600q0-1.800 1.800-1.800h6.400q1.800 0 1.800 1.800v5H10.200V10.400q0-.6-.6-.6H6.400q-.6 0-.6 .6v3.200z" fill="#3d9be6" stroke="#1f6fc0" stroke-width=".6"/><path d="M3.600 8.600q0-1.200 1.200-1.200h6.400q1.200 0 1.200 1.200v.8H3.600z" fill="#8fd0f8" opacity=".8"/></svg>
<span style="left:39.8px;top:-15px;transform:scaleX(0.9483);transform-origin:0 0;">Libraries</span>
<svg style="left:32px;top:1px" width="13" height="15" viewBox="0 0 13 15"><path d="M.5 .5h8.300l3.700 3.700V14.500H.5z" fill="#fff" stroke="#a2a2a2" stroke-width="1"/><path d="M8.800 .5v3.700h3.700" fill="#ececec" stroke="#a2a2a2" stroke-width=".8"/><g stroke="#8c9cd8" stroke-width=".9"><path d="M2.200 5.500h3.600M2.200 7.500h3.600M2.200 9.500h3.600M2.200 11.500h8.600"/></g><path d="M2.200 3.300h5" stroke="#2a8c8c" stroke-width="1"/><rect x="6.800" y="5.400" width="4" height="4.400" fill="#4a86c8"/><rect x="6.800" y="7.800" width="4" height="2" fill="#3f8f4a"/><path d="M.5 14.500h12" stroke="#777" stroke-width="1"/></svg>
<span style="left:49.9px;top:4px;transform:scaleX(0.9527);transform-origin:0 0;">Documents</span>
<svg style="left:32px;top:20px" width="13" height="16" viewBox="0 0 13 16"><path d="M6.500 .4h1.300q.5 2 2.600 3.500 2.700 2 1.500 5.700-.1-2.700-2.300-3.700-1-.4-1.800-.5V12.500z" fill="url(#gNote)" stroke="#1d66bc" stroke-width=".4"/><ellipse cx="4.100" cy="12.400" rx="3.800" ry="3.100" fill="url(#gNote)" stroke="#1d66bc" stroke-width=".4"/><ellipse cx="3.400" cy="11.400" rx="2" ry="1" fill="#a8d8fa" opacity=".75"/></svg>
<span style="left:49.9px;top:23px;transform:scaleX(0.9226);transform-origin:0 0;">Music</span>
<svg style="left:29.8px;top:41px" width="16" height="13" viewBox="0 0 16 13"><rect x=".5" y=".5" width="15" height="12" rx="1" fill="#f4f4f4" stroke="#8a8a8a"/><rect x="2" y="2" width="12" height="9" fill="#bfe3f2"/><path d="M2 6.500q3-2.500 6-.8t6-1.200V9H2z" fill="#3b8a86"/><rect x="2" y="8.200" width="12" height="2.800" fill="#2d6fc4"/><rect x="2" y="7.600" width="12" height=".9" fill="#2f8a4e"/></svg>
<span style="left:49.9px;top:42px;transform:scaleX(0.9689);transform-origin:0 0;">Pictures</span>
<svg style="left:31px;top:59px" width="14" height="15" viewBox="0 0 14 15"><rect x=".3" y=".3" width="13.400" height="14.400" fill="#20302e" stroke="#2e8a86" stroke-width=".6"/><rect x="3" y="1" width="8" height="6" fill="#3f9fec"/><rect x="3" y="8" width="8" height="6" fill="#3f9fec"/><path d="M3 1h2.500L3 4zM11 4.500V7H8.500z" fill="#c8603a"/><path d="M3 8h2L3 10.500zM11 11v3H7.500l2-2z" fill="#d08a3a"/><path d="M3 5.500l2.500 1.500H3zM3 12.500l2 1.500H3z" fill="#2a7a4a"/><g fill="#fff"><rect x="1" y="1.500" width="1.200" height="1.400"/><rect x="1" y="4.500" width="1.200" height="1.400"/><rect x="1" y="7.500" width="1.200" height="1.400"/><rect x="1" y="10.500" width="1.200" height="1.400"/><rect x="1" y="13" width="1.200" height="1.200"/><rect x="11.800" y="1.500" width="1.200" height="1.400"/><rect x="11.800" y="4.500" width="1.200" height="1.400"/><rect x="11.800" y="7.500" width="1.200" height="1.400"/><rect x="11.800" y="10.500" width="1.200" height="1.400"/><rect x="11.800" y="13" width="1.200" height="1.200"/></g></svg>
<span style="left:49.9px;top:61px;transform:scaleX(0.9272);transform-origin:0 0;">Videos</span>
<div style="left:1px;top:95px;width:140px;height:19px;background:#d6d3ce;"></div>
<svg style="left:20px;top:97px" width="16" height="14" viewBox="0 0 16 14"><rect x=".6" y="5.200" width="2" height="8" fill="#ececec" stroke="#9a9a9a" stroke-width=".6"/><rect x="1.100" y="5.800" width="1" height="1.600" fill="#2fc02f"/><rect x="4" y=".8" width="11.600" height="10.400" fill="#e6e6e2" stroke="#a4a4a0" stroke-width=".7"/><rect x="5.200" y="2" width="9.200" height="7.800" fill="url(#gMon)"/><path d="M9.400 2h5v5.500z" fill="#8fa8ff" opacity=".75"/><rect x="8.400" y="11.400" width="2.800" height="1.400" fill="#c0c0bc"/><rect x="6.200" y="12.600" width="7.200" height="1.100" fill="#dededa" stroke="#a4a4a0" stroke-width=".4"/><rect x=".4" y="13.200" width="2.400" height=".7" fill="#8a8a8a"/></svg>
<span style="left:39.8px;top:99px;transform:scaleX(0.9525);transform-origin:0 0;">Computer</span>
<svg style="left:20px;top:134px" width="16" height="16" viewBox="0 0 16 16"><circle cx="5.200" cy="5.300" r="5" fill="#2a62e4"/><path d="M1.600 3q2-2.800 4.800-2.400 1.600 1.400-.4 3-2.600 .6-2.600 2.600T1.500 8.400Q-.2 5.600 1.600 3z" fill="#34d83a"/><path d="M5.600 8.400q2 .4 1.600 2-2 .6-3.200-1z" fill="#34d83a"/><path d="M7.400 1.400q2 1 2.600 3l-1.600-.4z" fill="#7fd0ff"/><rect x="6.400" y="4.600" width="9.400" height="8" fill="#3a4ad8" stroke="#2a38b8" stroke-width=".6"/><rect x="7.400" y="5.600" width="7.400" height="6" fill="url(#gMon)"/><path d="M10.500 5.600h4.300v4z" fill="#7f9aff" opacity=".75"/><rect x="10.400" y="12.800" width="1.400" height="1.800" fill="#5060c0"/><path d="M8.600 15.700l2.500-1.400 2.500 1.400z" fill="#5060b8"/></svg>
<span style="left:39.8px;top:137px;transform:scaleX(0.9916);transform-origin:0 0;">Network</span>
</div>
<svg style="left:145px;top:109px" width="16" height="160"><rect width="16" height="160" fill="url(#dith)"/></svg>
<div style="left:145px;top:109px;width:16px;height:16px;background:#d6d3ce;"></div>
<div style="left:146px;top:110px;width:13px;height:1px;background:#ffffff;"></div>
<div style="left:146px;top:110px;width:1px;height:13px;background:#ffffff;"></div>
<div style="left:145px;top:124px;width:16px;height:1px;background:#424142;"></div>
<div style="left:160px;top:109px;width:1px;height:16px;background:#424142;"></div>
<div style="left:146px;top:123px;width:14px;height:1px;background:#848284;"></div>
<div style="left:159px;top:110px;width:1px;height:14px;background:#848284;"></div>
<svg style="left:149px;top:115px" width="7" height="4" shape-rendering="crispEdges" fill="#000"><rect x="3" y="0" width="1" height="1"/><rect x="2" y="1" width="3" height="1"/><rect x="1" y="2" width="5" height="1"/><rect x="0" y="3" width="7" height="1"/></svg>
<div style="left:145px;top:253px;width:16px;height:16px;background:#d6d3ce;"></div>
<div style="left:146px;top:254px;width:13px;height:1px;background:#ffffff;"></div>
<div style="left:146px;top:254px;width:1px;height:13px;background:#ffffff;"></div>
<div style="left:145px;top:268px;width:16px;height:1px;background:#424142;"></div>
<div style="left:160px;top:253px;width:1px;height:16px;background:#424142;"></div>
<div style="left:146px;top:267px;width:14px;height:1px;background:#848284;"></div>
<div style="left:159px;top:254px;width:1px;height:14px;background:#848284;"></div>
<svg style="left:149px;top:259px" width="7" height="4" shape-rendering="crispEdges" fill="#000"><rect x="0" y="0" width="7" height="1"/><rect x="1" y="1" width="5" height="1"/><rect x="2" y="2" width="3" height="1"/><rect x="3" y="3" width="1" height="1"/></svg>
<div style="left:145px;top:160px;width:16px;height:81px;background:#d6d3ce;"></div>
<div style="left:146px;top:161px;width:13px;height:1px;background:#ffffff;"></div>
<div style="left:146px;top:161px;width:1px;height:78px;background:#ffffff;"></div>
<div style="left:145px;top:240px;width:16px;height:1px;background:#424142;"></div>
<div style="left:160px;top:160px;width:1px;height:81px;background:#424142;"></div>
<div style="left:146px;top:239px;width:14px;height:1px;background:#848284;"></div>
<div style="left:159px;top:161px;width:1px;height:79px;background:#848284;"></div>
<div style="left:164px;top:109px;width:668px;height:160px;background:#ffffff;"></div>
<div style="left:164px;top:109px;width:668px;height:22px;background:#d6d3ce;"></div>
<div style="left:164px;top:129px;width:668px;height:1px;background:#848284;"></div>
<div style="left:164px;top:130px;width:668px;height:1px;background:#424142;"></div>
<div style="left:164px;top:109px;width:272px;height:1px;background:#ffffff;"></div>
<div style="left:164px;top:109px;width:1px;height:20px;background:#ffffff;"></div>
<div style="left:434px;top:110px;width:1px;height:20px;background:#848284;"></div>
<div style="left:435px;top:109px;width:1px;height:22px;background:#424142;"></div>
<span style="left:179.3px;top:115px;transform:scaleX(0.9373);transform-origin:0 0;">Name</span>
<div style="left:436px;top:109px;width:120px;height:1px;background:#ffffff;"></div>
<div style="left:436px;top:109px;width:1px;height:20px;background:#ffffff;"></div>
<div style="left:554px;top:110px;width:1px;height:20px;background:#848284;"></div>
<div style="left:555px;top:109px;width:1px;height:22px;background:#424142;"></div>
<span style="left:440.2px;top:115px;transform:scaleX(0.9872);transform-origin:0 0;">Date modified</span>
<div style="left:556px;top:109px;width:120px;height:1px;background:#ffffff;"></div>
<div style="left:556px;top:109px;width:1px;height:20px;background:#ffffff;"></div>
<div style="left:674px;top:110px;width:1px;height:20px;background:#848284;"></div>
<div style="left:675px;top:109px;width:1px;height:22px;background:#424142;"></div>
<span style="left:561px;top:115px;transform:scaleX(1.0064);transform-origin:0 0;">Type</span>
<div style="left:676px;top:109px;width:79px;height:1px;background:#ffffff;"></div>
<div style="left:676px;top:109px;width:1px;height:20px;background:#ffffff;"></div>
<div style="left:753px;top:110px;width:1px;height:20px;background:#848284;"></div>
<div style="left:754px;top:109px;width:1px;height:22px;background:#424142;"></div>
<span style="left:681px;top:115px;transform:scaleX(0.9113);transform-origin:0 0;">Size</span>
<div style="left:755px;top:109px;width:77px;height:1px;background:#ffffff;"></div>
<div style="left:755px;top:109px;width:1px;height:20px;background:#ffffff;"></div>
<div style="left:830px;top:110px;width:1px;height:20px;background:#848284;"></div>
<div style="left:831px;top:109px;width:1px;height:22px;background:#424142;"></div>
<svg style="left:212px;top:118px" width="5" height="3" shape-rendering="crispEdges" fill="#848284"><rect x="2" y="0" width="1" height="1"/><rect x="1" y="1" width="3" height="1"/><rect x="0" y="2" width="5" height="1"/></svg>
<svg style="left:184px;top:140px" width="13" height="16" viewBox="0 0 13 16"><path d="M.5 .5h8.500l3.500 3.500V15.500H.5z" fill="#fdfdfd" stroke="#b6b6b6" stroke-width="1"/><path d="M9 .5v3.500h3.500" fill="#f2f2f2" stroke="#b6b6b6" stroke-width=".8"/><path d="M.5 15.500h12" stroke="#747474" stroke-width="1"/><path d="M12.500 4.500v11" stroke="#9c9c9c" stroke-width="1"/><path d="M3.800 11.700l5.600 0V5.200l.6-.2v6.900l-6.200 .2z" fill="#dcc9a0"/><path d="M3 4.300l6-.4q.4 3.600 0 7.300l-6.800-.3Q3.200 7.500 3 4.300z" fill="url(#gSky)"/></svg>
<span style="left:200.2px;top:143px;transform:scaleX(0.9764);transform-origin:0 0;">Lync.x-none.msi.zip_MondoWW.mcxml</span>
<span style="left:440.5px;top:143px;transform:scaleX(0.9897);transform-origin:0 0;">7/18/2016 3:26 PM</span>
<span style="left:561px;top:143px;transform:scaleX(0.8819);transform-origin:0 0;">MCXML File</span>
<span style="right:87px;top:143px;transform:scaleX(0.9435);transform-origin:100% 0;">1,477 KB</span>
<svg style="left:184px;top:162px" width="13" height="16" viewBox="0 0 13 16"><path d="M.5 .5h8.500l3.500 3.500V15.500H.5z" fill="#fdfdfd" stroke="#b6b6b6" stroke-width="1"/><path d="M9 .5v3.500h3.500" fill="#f2f2f2" stroke="#b6b6b6" stroke-width=".8"/><path d="M.5 15.500h12" stroke="#747474" stroke-width="1"/><path d="M12.500 4.500v11" stroke="#9c9c9c" stroke-width="1"/><path d="M3.800 11.700l5.600 0V5.200l.6-.2v6.900l-6.200 .2z" fill="#dcc9a0"/><path d="M3 4.300l6-.4q.4 3.600 0 7.300l-6.800-.3Q3.200 7.500 3 4.300z" fill="url(#gSky)"/></svg>
<span style="left:200.2px;top:165px;transform:scaleX(0.9943);transform-origin:0 0;">Lync.x-none.msi.zip_MondoWW_WoW6432....</span>
<span style="left:440.5px;top:165px;transform:scaleX(0.9897);transform-origin:0 0;">7/18/2016 3:26 PM</span>
<span style="left:561px;top:165px;transform:scaleX(0.8819);transform-origin:0 0;">MCXML File</span>
<span style="right:87px;top:165px;transform:scaleX(0.9435);transform-origin:100% 0;">1,553 KB</span>
</div>
</div>
</body></html>
